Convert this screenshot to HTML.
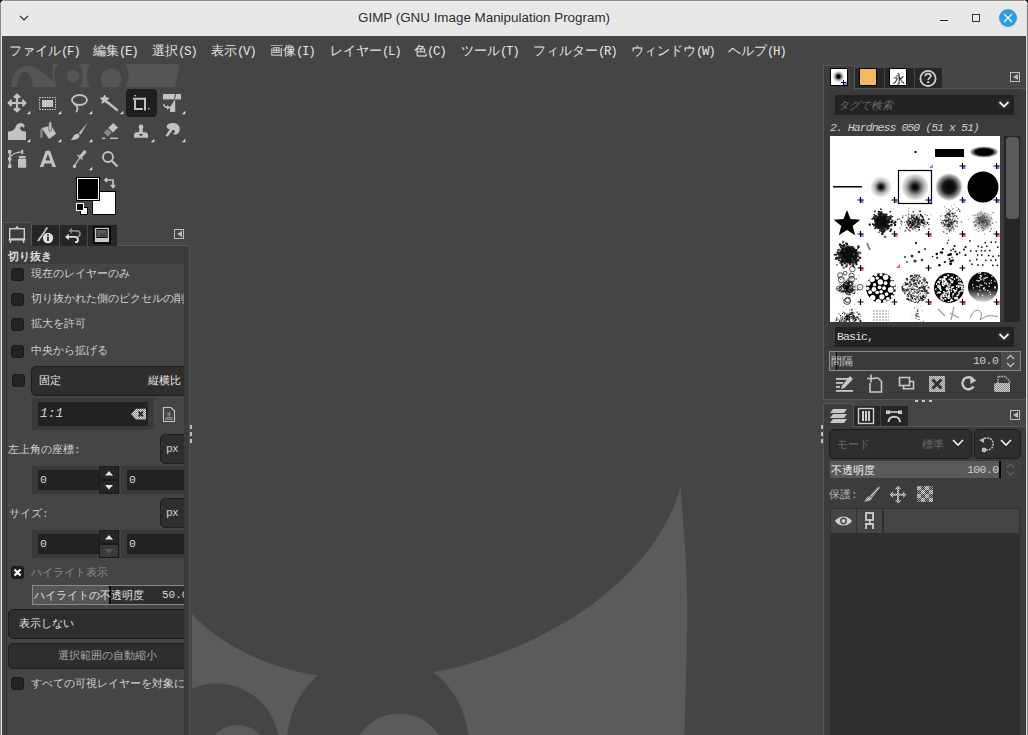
<!DOCTYPE html>
<html><head><meta charset="utf-8">
<style>
*{box-sizing:border-box;margin:0;padding:0}
html,body{width:1028px;height:735px;overflow:hidden;background:#1a1a1a}
body{position:relative;font-family:"Liberation Sans",sans-serif;color:#dcdcdc}
.a{position:absolute}
.m{font-family:"Liberation Mono",monospace}
#win{left:0;top:0;width:1028px;height:735px;background:#454545;border-radius:5px 5px 0 0;overflow:hidden}
#title{left:0;top:0;width:1028px;height:36px;background:#e8e8e8;color:#2e2e2e;font-size:14px}
#menubar{left:2px;top:36px;width:1024px;height:28px;background:#454545;font-size:13px;color:#e6e6e6}
.mi{position:absolute;top:6px;white-space:nowrap}
.mi .m{letter-spacing:-1.4px;font-size:12.5px}
.bl{left:0;top:4px;width:2px;height:731px;background:linear-gradient(90deg,#8a8a8a 0 1px,#e4e4e4 1px 2px)}
.br{left:1026px;top:4px;width:2px;height:731px;background:linear-gradient(90deg,#d8d8d8 0 1px,#8a8a8a 1px 2px)}
.ico{position:absolute}
.tri{position:absolute;width:0;height:0;border-left:5px solid transparent;border-bottom:5px solid #d8d8d8}
.tab{position:absolute;background:#262626}
.tabact{position:absolute;background:#454545;border:1px solid #5c5c5c;border-bottom:none}
.pmenu{position:absolute;width:10px;height:10px;border:1px solid #bdbdbd}
.pmenu:after{content:"";position:absolute;left:2px;top:1px;border-right:5px solid #bdbdbd;border-top:3.5px solid transparent;border-bottom:3.5px solid transparent}
.opt{font-size:11px;color:#d2d2d2;white-space:nowrap;margin-top:-1px}
.cb{position:absolute;width:13px;height:13px;border-radius:3px;background:#232323;border:1px solid #1a1a1a}
.btn{position:absolute;background:#2e2e2e;border:1px solid #1d1d1d;border-radius:5px}
.ent{position:absolute;background:#222}
.frame{position:absolute;background:#3a3a3a}
</style></head><body>
<div id="win" class="a">
  <!-- TITLE -->
  <div id="title" class="a">
    <div class="a" style="left:4px;top:0;width:1020px;height:1px;background:#8a8a8a"></div><div class="a" style="left:2px;top:1px;width:1024px;height:1px;background:#f6f6f6"></div>
    <svg class="a" style="left:18px;top:14px" width="12" height="9"><path d="M2 2 L6 6 L10 2" fill="none" stroke="#333" stroke-width="1.2"/></svg>
    <div class="a" style="left:358px;top:10px;font-size:13.4px;white-space:nowrap">GIMP (GNU Image Manipulation Program)</div>
    <div class="a" style="left:940px;top:20px;width:8px;height:1px;background:#222"></div>
    <div class="a" style="left:972px;top:14px;width:8px;height:8px;border:1px solid #333"></div>
    <div class="a" style="left:999px;top:9px;width:18px;height:18px;border-radius:50%;background:#2a9ddf"></div>
    <svg class="a" style="left:1003px;top:13px" width="10" height="10"><path d="M1 1L9 9M9 1L1 9" stroke="#fff" stroke-width="1.2"/></svg>
  </div>
  <!-- MENUBAR -->
  <div id="menubar" class="a">
    <span class="mi" style="left:7px">ファイル<span class="m">(F)</span></span>
    <span class="mi" style="left:91px">編集<span class="m">(E)</span></span>
    <span class="mi" style="left:150px">選択<span class="m">(S)</span></span>
    <span class="mi" style="left:209px">表示<span class="m">(V)</span></span>
    <span class="mi" style="left:268px">画像<span class="m">(I)</span></span>
    <span class="mi" style="left:328px">レイヤー<span class="m">(L)</span></span>
    <span class="mi" style="left:412px">色<span class="m">(C)</span></span>
    <span class="mi" style="left:459px">ツール<span class="m">(T)</span></span>
    <span class="mi" style="left:531px">フィルター<span class="m">(R)</span></span>
    <span class="mi" style="left:629px">ウィンドウ<span class="m">(W)</span></span>
    <span class="mi" style="left:726px">ヘルプ<span class="m">(H)</span></span>
  </div>

  <!-- CANVAS -->
  <svg class="a" style="left:0;top:0" width="1028" height="735">
    <rect x="190" y="64" width="633" height="671" fill="#454545"/>
    <path d="M189.5,611.4 L196.9,619.1 L204.7,626.2 L212.9,632.9 L221.5,639.1 L230.5,644.8 L239.7,650.1 L249.2,654.8 L258.9,659.1 L268.8,663.0 L278.8,666.4 L288.9,669.4 L299.2,671.9 L309.5,674.1 L319.8,675.8 L330.2,677.1 L340.6,678.1 L351.0,678.7 L361.3,679.0 L371.7,679.0 L381.9,678.6 L392.1,678.0 L402.3,677.0 L412.3,675.8 L422.3,674.3 L432.2,672.6 L442.0,670.6 L451.7,668.4 L461.2,665.9 L470.7,663.3 L480.1,660.4 L489.4,657.3 L498.6,654.0 L507.6,650.5 L516.6,646.8 L525.4,643.0 L534.1,638.9 L542.7,634.6 L551.2,630.1 L559.5,625.5 L567.7,620.6 L575.8,615.5 L583.7,610.2 L591.5,604.7 L599.0,599.0 L606.4,593.1 L613.6,587.0 L620.6,580.6 L627.3,574.0 L633.8,567.2 L640.1,560.2 L646.0,552.9 L651.7,545.4 L657.0,537.7 L662.0,529.8 L666.6,521.6 L670.7,513.3 L674.5,504.8 L677.8,496.1 L680.5,487.2 C681.0,494.3 682.8,514.4 683.8,529.9 C684.8,545.4 686.3,561.5 686.8,580.0 C687.3,598.5 687.2,622.7 687.0,641.0 C686.8,659.3 686.1,674.3 685.7,690.0 C685.3,705.7 684.7,727.5 684.5,735.0 L189,735 Z" fill="#5b5b5b"/>
    <circle cx="216.5" cy="746.3" r="62.7" fill="#454545"/>
    <circle cx="377.7" cy="743.8" r="90.9" fill="#454545"/>
    <circle cx="237.5" cy="755.5" r="30.5" fill="#5b5b5b"/>
    <circle cx="399.3" cy="760.9" r="47.4" fill="#5b5b5b"/>
    <rect x="190" y="64" width="2" height="671" fill="#454545"/>
  </svg>

  <!-- LEFT DOCK -->
  <div class="a" style="left:2px;top:64px;width:188px;height:671px;background:#454545"></div>
  <svg class="a" style="left:0;top:0" width="200" height="220">
    <defs><clipPath id="bn"><rect x="2" y="64" width="186" height="23"/></clipPath></defs>
    <g clip-path="url(#bn)" fill="#555555">
      <path d="M52.5,64 L179,64 L175,87 L11,87 C11,74 19,66 28,66 C37,66 45,74 52.5,81 Z"/>
      <ellipse cx="25" cy="87.5" rx="7.8" ry="15.8" fill="#454545"/>
      <ellipse cx="68.5" cy="76" rx="14.2" ry="17" fill="#454545"/>
      <circle cx="73" cy="76.3" r="6.3"/>
      <ellipse cx="107.7" cy="76" rx="20.8" ry="22" fill="#454545"/>
      <circle cx="111" cy="79" r="10.5"/>
    </g>
    <rect x="126" y="89" width="31" height="28" rx="4" fill="#1e1e1e"/>
    <g fill="#c3c3c3" stroke="none">
      <!-- move -->
      <path d="M17,95 V111 M9,103 H25 M14,97.6 L17,94.8 L20,97.6 M14,108.4 L17,111.2 L20,108.4 M11.6,100 L8.8,103 L11.6,106 M22.4,100 L25.2,103 L22.4,106" fill="none" stroke="#c3c3c3" stroke-width="2.2"/>
      <!-- rect select -->
      <rect x="39.5" y="97.5" width="16" height="12" fill="none" stroke="#c3c3c3" stroke-width="1" stroke-dasharray="1.5 1"/>
      <rect x="42" y="100" width="11" height="7"/>
      <!-- lasso -->
      <ellipse cx="79.5" cy="100" rx="7.5" ry="5" fill="none" stroke="#c3c3c3" stroke-width="1.8"/>
      <path d="M73.5,103 C75,104 77,106 77.5,108 C78,110 77,111 76,112" fill="none" stroke="#c3c3c3" stroke-width="1.8"/>
      <!-- fuzzy -->
      <polygon points="104.6,95.0 105.9,97.8 109.0,98.2 106.7,100.3 107.3,103.3 104.6,101.8 101.9,103.3 102.5,100.3 100.2,98.2 103.3,97.8" stroke="#c3c3c3" stroke-width="0.8" stroke-linejoin="round"/>
      <path d="M106.5,101.5 L117.8,110.6" stroke="#c3c3c3" stroke-width="2.4"/>
      <!-- crop -->
      <path d="M133,98.7 H145 V110.5 M135,100 V109 H142.8" fill="none" stroke="#c3c3c3" stroke-width="2"/><rect x="134.5" y="95" width="1.5" height="1.3"/><rect x="148" y="108" width="1.4" height="1.4"/>
      <!-- transform -->
      <rect x="163" y="94" width="18" height="5.4"/>
      <path d="M175.2,99 V112 H170 V107 Z"/>
      <path d="M163.8,104 C163.8,107 165.5,107.5 168.5,107.5" fill="none" stroke="#c3c3c3" stroke-width="1.5"/>
      <path d="M167,105 L170.2,107.5 L167,110Z"/>
      <path d="M175.6,94 L174.6,99.4" stroke="#454545" stroke-width="0.9"/>
      <!-- warp -->
      <path d="M8,140 L8,131.6 C13,131.6 15,129 16,126 C17.5,122.5 23,121.5 24.5,125.5 C25,127 24,128 23,127.5 C22.5,126 20.5,126 20.2,128 C20,130 22,131.6 26,131.6 L26,140 Z"/>
      <!-- bucket -->
      <path d="M41.6,128 L51.3,125.4 L56.1,133.8 L49.1,139 Z"/>
      <path d="M40.3,130 Q40.5,128.8 42,128.3 L42.6,129 V137 Q42.6,138 41.5,138 Q40.3,138 40.3,137Z" fill="#8a8a8a"/>
      <rect x="48.8" y="121.8" width="2.9" height="9.5" rx="1.4" stroke="#454545" stroke-width="0.6"/>
      <!-- brush -->
      <path d="M87.8,122.5 L80.6,134.6 L78.6,133.2 Z"/>
      <path d="M78,133.6 C80,135 80,137 78,138.6 C76,140 73,140 70.8,140 C72.5,138.5 73,135.5 75.5,134.2Z"/>
      <!-- eraser -->
      <path d="M113.4,123 L118,127.5 L112.9,132.4 L108.3,127.8Z"/>
      <path d="M107.6,128.8 L111.6,132.8 L107.9,136.4 L103.9,132.4Z" fill="#8a8a8a"/>
      <rect x="102" y="137.6" width="3.2" height="1.4"/><rect x="110" y="137.6" width="8" height="1.4"/>
      <!-- clone -->
      <circle cx="141" cy="127" r="2.4"/><path d="M139.6,128.5 H142.4 L143,132.5 H139Z"/>
      <path d="M137,132.3 H145 C146.5,132.3 148,133.5 148,135 V137.8 H134 V135 C134,133.5 135.5,132.3 137,132.3Z"/>
      <path d="M138.6,134 H143.4 L141,136.6Z" fill="#454545"/>
      <!-- smudge -->
      <path d="M171.5,123.2 C176.5,122.2 180.5,125.5 179.7,130.2 C179.2,133.8 175.5,135.8 172.8,133.8 C174.8,133 175.5,131.5 174.5,130.5 C173.5,129.5 172.3,130.3 171.8,131 L167.6,136.8 L165.6,135.4 L169.6,129.5 C167,128.5 166.2,127 166.8,125.6 C167.5,124 169,123.5 171.5,123.2Z"/>
      <!-- paths -->
      <rect x="8" y="150" width="3.4" height="3.4" rx="0.6"/><rect x="8" y="164.6" width="3.4" height="3.4" rx="0.6"/><rect x="8" y="157.2" width="3.4" height="3.4" rx="0.6"/>
      <rect x="9" y="152" width="1.5" height="14"/>
      <path d="M10.5,156.5 C13,153.5 17,152 22,151.8" fill="none" stroke="#c3c3c3" stroke-width="1.3"/>
      <rect x="21.4" y="149.8" width="1.8" height="4.4" rx="0.5"/>
      <rect x="19" y="156" width="6.6" height="2.2" rx="0.4"/><rect x="18" y="158.8" width="8.2" height="8.9" rx="0.8"/>
      <!-- text A -->
      <path d="M45.8,150.7 H50 L56,167 H52.4 L51.2,163.6 H44.6 L43.4,167 H39.8 Z M45.6,160.6 H50.2 L47.9,153.9 Z" fill-rule="evenodd"/>
      <!-- picker -->
      <path d="M84,150.3 C86,150 86.8,151.5 86,153 L81.5,158 L79.2,156 Z"/>
      <path d="M77.5,155 L82.5,159.5" stroke="#c3c3c3" stroke-width="1.5"/>
      <path d="M80,157.5 L74.5,165.5" stroke="#c3c3c3" stroke-width="1.3"/>
      <circle cx="74.5" cy="166.3" r="1.7"/>
      <!-- zoom -->
      <circle cx="108" cy="157" r="5" fill="none" stroke="#c3c3c3" stroke-width="1.8"/>
      <path d="M111.5,160.5 L117.5,166.5" stroke="#c3c3c3" stroke-width="2.2"/>
    </g>
    <g fill="#dcdcdc">
      <path d="M30.3,110.8 V114.3 H26.8Z M61.3,110.8 V114.3 H57.8Z M92.3,110.8 V114.3 H88.8Z M123.3,110.8 V114.3 H119.8Z M185.3,110.8 V114.3 H181.8Z"/>
      <path d="M30.3,138.8 V142.3 H26.8Z M61.3,138.8 V142.3 H57.8Z M92.3,138.8 V142.3 H88.8Z M154.3,138.8 V142.3 H150.8Z M185.3,138.8 V142.3 H181.8Z"/>
      <path d="M92.3,166.8 V170.3 H88.8Z"/>
    </g>
    <!-- fg/bg -->
    <rect x="92.5" y="191.5" width="23" height="23" fill="#fff" stroke="#000" stroke-width="1"/>
    <rect x="76.5" y="177.5" width="23" height="23" fill="#000" stroke="#000" stroke-width="1"/>
    <rect x="77.5" y="178.5" width="21" height="21" fill="#000" stroke="#fff" stroke-width="1"/>
    <path d="M105,180 H113 V186 M107,178 L105,180 L107,182 M111,185 L113,187.5 L115,185" fill="none" stroke="#c8c8c8" stroke-width="1.6"/>
    <rect x="80.5" y="207.5" width="7" height="7" fill="#fff" stroke="#000"/>
    <rect x="76.5" y="203.5" width="7" height="7" fill="#000" stroke="#fff"/>
  </svg>
  <!-- left dock tabs -->
  <div class="a" style="left:3px;top:245px;width:187px;height:490px;background:#3c3c3c;border-left:1px solid #414141;border-top:1px solid #555;border-right:1px solid #555"></div>
  <div class="tabact" style="left:3px;top:222px;width:29px;height:24px;background:#3c3c3c;border-color:#555"></div>
  <div class="tab" style="left:32px;top:225px;width:27px;height:21px"></div>
  <div class="tab" style="left:60px;top:225px;width:27px;height:21px"></div>
  <div class="tab" style="left:88px;top:225px;width:29px;height:21px"></div>
  <svg class="a" style="left:0;top:218px" width="130" height="30">
    <g fill="none" stroke="#cdcdcd" stroke-width="1.4">
      <rect x="9.7" y="10.7" width="14.6" height="10.3"/>
      <path d="M8.5,21.7 H25.5 M11,21.7 L10,25 M23,21.7 L24,25"/>
    </g>
    <path d="M15.3,10 L17,7.6 L18.7,10Z" fill="#cdcdcd"/>
    <path d="M37,23 L46.5,9 L48,10 L39,23.2 Z" fill="#cdcdcd"/>
    <path d="M40,18 L45,11" stroke="#262626" stroke-width="0.8"/>
    <circle cx="48" cy="20" r="5.2" fill="#e0e0e0"/><rect x="47.1" y="18.6" width="1.8" height="4.4" fill="#262626"/><rect x="47.1" y="16.2" width="1.8" height="1.6" fill="#262626"/>
    <path d="M71,12.8 H76.5 C79,12.8 80,14.2 80,15.8 C80,17.4 79,18.6 77.5,18.6" fill="none" stroke="#8a8a8a" stroke-width="1.8"/>
    <path d="M68.5,12.8 L72,9.8 V15.8Z" fill="#8a8a8a"/>
    <path d="M67.5,18.9 H74.5 C77,18.9 78,20.3 78,21.9 C78,23.5 77,24.2 75,24.2" fill="none" stroke="#dedede" stroke-width="1.8"/>
    <path d="M65,18.9 L68.8,15.8 V22Z" fill="#dedede"/>
    <rect x="93" y="8" width="18" height="18" fill="#000"/>
    <rect x="94.8" y="9.8" width="14.2" height="14.3" fill="#c8c8c8"/>
    <rect x="96.3" y="11" width="11.4" height="9" fill="#111"/>
    <rect x="97.3" y="12" width="9.4" height="7" fill="#5e5e5e"/>
    <path d="M99,19 L101,14 L103,17 L105,13 L106,19Z" fill="#444"/>
  </svg>
  <div class="pmenu" style="left:174px;top:229px"></div>
  <!-- tool options -->
  <div class="a" style="left:8px;top:248.5px;font-size:11px;font-weight:normal;-webkit-text-stroke:0.35px #e6e6e6;color:#e6e6e6">切り抜き</div>
  <div class="a" style="left:8px;top:264px;width:176px;height:471px;background:#454545"></div>
  <div class="a" style="left:0;top:0;width:184px;height:735px;overflow:hidden">
  <div class="cb" style="left:11px;top:268px"></div><div class="a opt" style="left:31px;top:267px">現在のレイヤーのみ</div>
  <div class="cb" style="left:11px;top:293px"></div><div class="a opt" style="left:31px;top:292px">切り抜かれた側のピクセルの削</div>
  <div class="cb" style="left:11px;top:318px"></div><div class="a opt" style="left:31px;top:317px">拡大を許可</div>
  <div class="cb" style="left:11px;top:345px"></div><div class="a opt" style="left:31px;top:344px">中央から拡げる</div>
  <div class="cb" style="left:12px;top:374px"></div>
  <div class="btn" style="left:31px;top:366px;width:160px;height:30px"></div>
  <div class="a opt" style="left:39px;top:374px;color:#e8e8e8">固定</div>
  <div class="a opt" style="left:148px;top:374px;color:#e8e8e8">縦横比</div>
  <div class="frame" style="left:32px;top:398px;width:122px;height:32px"></div>
  <div class="ent" style="left:38px;top:402px;width:110px;height:24px"></div>
  <div class="a m" style="left:40px;top:406px;font-size:13px;font-style:italic;color:#d0d0d0">1:1</div>
  <svg class="a" style="left:130px;top:407px" width="18" height="14"><defs><pattern id="ck5" width="2" height="2" patternUnits="userSpaceOnUse"><rect width="2" height="2" fill="#888"/><rect width="1" height="1" fill="#e0e0e0"/><rect x="1" y="1" width="1" height="1" fill="#e0e0e0"/></pattern></defs><path d="M1,7 L6,1.8 H16 V12.6 H6 Z" fill="url(#ck5)"/><path d="M8.5,4.5 L13,9.5 M13,4.5 L8.5,9.5" stroke="#1e1e1e" stroke-width="1.8"/></svg>
  <svg class="a" style="left:162px;top:406px" width="14" height="17"><path d="M1.5,1.5 H9 L12.5,5 V15.5 H1.5 Z" fill="none" stroke="#c8c8c8" stroke-width="1.1"/><circle cx="7" cy="8" r="2" fill="#7a7a7a"/><path d="M3,14 C3,11 5,10.5 7,10.5 C9,10.5 11,11 11,14Z" fill="#7a7a7a"/></svg>
  <div class="a opt" style="left:8px;top:443px">左上角の座標<span class="m" style="font-size:11px;letter-spacing:-1px">:</span></div>
  <div class="btn" style="left:160px;top:434px;width:40px;height:30px"></div>
  <div class="a m" style="left:166px;top:443px;font-size:11px;color:#d6d6d6;letter-spacing:-0.5px">px</div>
  <!-- spin row 1 -->
  <div class="frame" style="left:32px;top:466px;width:88px;height:28px"></div>
  <div class="ent" style="left:38px;top:470px;width:61px;height:20px"></div>
  <div class="a m" style="left:40px;top:473px;font-size:11.5px;color:#d6d6d6">0</div>
  <div class="a" style="left:99px;top:466px;width:20px;height:14px;background:#262626;border:1px solid #1a1a1a"></div>
  <div class="a" style="left:99px;top:480px;width:20px;height:14px;background:#262626;border:1px solid #1a1a1a"></div>
  <svg class="a" style="left:99px;top:466px" width="20" height="28"><path d="M6,9.5 L10,5 L14,9.5Z M6,19 L10,23.5 L14,19Z" fill="#e6e6e6"/></svg>
  <div class="frame" style="left:121px;top:466px;width:70px;height:28px"></div>
  <div class="ent" style="left:127px;top:470px;width:60px;height:20px"></div>
  <div class="a m" style="left:129px;top:473px;font-size:11.5px;color:#d6d6d6">0</div>
  <div class="a opt" style="left:9px;top:507px">サイズ<span class="m" style="font-size:11px;letter-spacing:-1px">:</span></div>
  <div class="btn" style="left:160px;top:498px;width:40px;height:30px"></div>
  <div class="a m" style="left:166px;top:507px;font-size:11px;color:#d6d6d6;letter-spacing:-0.5px">px</div>
  <!-- spin row 2 -->
  <div class="frame" style="left:32px;top:530px;width:88px;height:28px"></div>
  <div class="ent" style="left:38px;top:534px;width:61px;height:20px"></div>
  <div class="a m" style="left:40px;top:537px;font-size:11.5px;color:#d6d6d6">0</div>
  <div class="a" style="left:99px;top:530px;width:20px;height:14px;background:#262626;border:1px solid #1a1a1a"></div>
  <div class="a" style="left:99px;top:544px;width:20px;height:14px;background:#3a3a3a;border:1px solid #1a1a1a"></div>
  <svg class="a" style="left:99px;top:530px" width="20" height="28"><path d="M6,9.5 L10,5 L14,9.5Z" fill="#e6e6e6"/><path d="M6,19 L10,23.5 L14,19Z" fill="#5a5a5a"/></svg>
  <div class="frame" style="left:121px;top:530px;width:70px;height:28px"></div>
  <div class="ent" style="left:127px;top:534px;width:60px;height:20px"></div>
  <div class="a m" style="left:129px;top:537px;font-size:11.5px;color:#d6d6d6">0</div>
  <!-- highlight -->
  <div class="cb" style="left:11px;top:566px;background:#1c1c1c"></div>
  <svg class="a" style="left:11px;top:566px" width="13" height="13"><path d="M3.5,3.5 L9.5,9.5 M9.5,3.5 L3.5,9.5" stroke="#fff" stroke-width="2.2"/></svg>
  <div class="a opt" style="left:31px;top:566px;color:#8c8c8c">ハイライト表示</div>
  <div class="a" style="left:32px;top:585px;width:160px;height:20px;background:#2e2e2e;border:1px solid #8a8a8a"></div>
  <div class="a" style="left:33px;top:586px;width:76px;height:18px;background:#555"></div>
  <div class="a" style="left:109px;top:586px;width:1.5px;height:18px;background:#000"></div>
  <div class="a opt" style="left:34px;top:589px;color:#e0e0e0">ハイライトの不透明度</div>
  <div class="a m" style="left:162px;top:589px;font-size:11px;color:#d8d8d8">50.0</div>
  <div class="btn" style="left:8px;top:609px;width:190px;height:30px"></div>
  <div class="a opt" style="left:19px;top:617px;color:#e4e4e4">表示しない</div>
  <div class="btn" style="left:8px;top:643px;width:190px;height:26px"></div>
  <div class="a opt" style="left:58px;top:649px;color:#a6a6a6">選択範囲の自動縮小</div>
  <div class="cb" style="left:11px;top:677px"></div><div class="a opt" style="left:31px;top:677px">すべての可視レイヤーを対象に</div>
  </div>
  <div class="a" style="left:189px;top:246px;width:1px;height:489px;background:#555"></div>
  <div class="a" style="left:190px;top:425px;width:2px;height:18px;background:repeating-linear-gradient(#bdbdbd 0 4px,transparent 4px 7px)"></div>
    <!-- RIGHT DOCK -->
  <div class="a" style="left:823px;top:64px;width:203px;height:671px;background:#454545"></div>
  <!-- brushes frame -->
  <div class="a" style="left:823px;top:88px;width:203px;height:312px;background:#3c3c3c;border:1px solid #555;border-right:none"></div>
  <div class="tabact" style="left:823px;top:65px;width:32px;height:24px;background:#3c3c3c;border-color:#555"></div>
  <div class="tab" style="left:855px;top:68px;width:29px;height:20px"></div>
  <div class="tab" style="left:885px;top:68px;width:29px;height:20px"></div>
  <div class="tab" style="left:915px;top:68px;width:27px;height:20px"></div>
  <svg class="a" style="left:823px;top:64px" width="130" height="26">
    <defs><radialGradient id="tb"><stop offset="0" stop-color="#000"/><stop offset="0.2" stop-color="#000"/><stop offset="1" stop-color="#fff" stop-opacity="0"/></radialGradient></defs>
    <rect x="7" y="4" width="18" height="18" fill="#000"/><rect x="8" y="5" width="16" height="16" fill="#fff"/>
    <circle cx="15.5" cy="12.5" r="7" fill="url(#tb)"/>
    <rect x="20" y="18" width="4" height="3" fill="#7a9cff"/><path d="M18,18.5 h5 M20.5,16 v5" stroke="#000" stroke-width="1"/>
    <rect x="36" y="4" width="18" height="18" fill="#000"/><rect x="37" y="5" width="16" height="16" fill="#f4b860"/>
    <rect x="66" y="4" width="18" height="18" fill="#000"/><rect x="67" y="5" width="16" height="16" fill="#fff"/>
    <circle cx="105" cy="14.4" r="7.6" fill="none" stroke="#cfcfcf" stroke-width="1.8"/><path d="M102.2,12.3 C102.2,10.3 103.6,9.6 105,9.6 C106.6,9.6 107.8,10.5 107.8,12 C107.8,13.8 105.2,14 105.2,16" fill="none" stroke="#cfcfcf" stroke-width="1.8"/><rect x="104.2" y="17.2" width="2" height="2" fill="#cfcfcf"/>
  </svg>
  <div class="a" style="left:893px;top:71px;font-size:12px;color:#000">永</div>
  
  <div class="pmenu" style="left:1010px;top:72px"></div>
  <div class="frame" style="left:829px;top:91px;width:192px;height:28px;background:#393939"></div>
  <div class="ent" style="left:835px;top:95px;width:179px;height:20px"></div>
  <div class="a" style="left:838px;top:98px;font-size:11px;font-style:italic;color:#6e6e6e">タグで検索</div>
  <svg class="a" style="left:998px;top:99px" width="12" height="10"><rect x="0" y="0" width="12" height="10" fill="#2a2a2a"/><path d="M1.5,3 L6,7.5 L10.5,3" fill="none" stroke="#f0f0f0" stroke-width="1.8"/></svg>
  <div class="a m" style="left:830px;top:121px;font-size:11.5px;font-style:italic;color:#d0d0d0;letter-spacing:-0.95px;white-space:nowrap">2. Hardness 050 (51 x 51)</div>
  <div class="a" style="left:1004px;top:136px;width:16px;height:186px;background:#262626"></div>
  <div class="a" style="left:1006px;top:137px;width:13px;height:82px;background:#595959;border-radius:4px"></div>
  <svg class="a" style="left:0;top:0" width="1028" height="735">
<defs>
<radialGradient id="g1"><stop offset="0" stop-color="#000"/><stop offset="0.18" stop-color="#000" stop-opacity="0.9"/><stop offset="0.55" stop-color="#000" stop-opacity="0.3"/><stop offset="1" stop-color="#000" stop-opacity="0"/></radialGradient>
<radialGradient id="g2"><stop offset="0" stop-color="#000"/><stop offset="0.2" stop-color="#000" stop-opacity="0.9"/><stop offset="0.6" stop-color="#000" stop-opacity="0.35"/><stop offset="1" stop-color="#000" stop-opacity="0"/></radialGradient>
<radialGradient id="g3"><stop offset="0" stop-color="#000"/><stop offset="0.45" stop-color="#000" stop-opacity="0.9"/><stop offset="0.8" stop-color="#000" stop-opacity="0.4"/><stop offset="1" stop-color="#000" stop-opacity="0"/></radialGradient>
<linearGradient id="g4" x1="0" y1="0" x2="0" y2="1"><stop offset="0" stop-color="#000"/><stop offset="0.55" stop-color="#111"/><stop offset="1" stop-color="#ddd"/></linearGradient>
<radialGradient id="g5"><stop offset="0" stop-color="#000" stop-opacity="0.6"/><stop offset="1" stop-color="#000" stop-opacity="0"/></radialGradient>
<radialGradient id="ge"><stop offset="0" stop-color="#000"/><stop offset="0.6" stop-color="#000"/><stop offset="1" stop-color="#000" stop-opacity="0.15"/></radialGradient>
<clipPath id="bg"><rect x="830" y="136" width="170" height="186"/></clipPath>
</defs>
<rect x="830" y="136" width="170" height="186" fill="#fff"/>
<g clip-path="url(#bg)" fill="#000">
<rect x="914.5" y="151" width="2" height="2"/>
<rect x="935" y="149" width="29" height="8"/>
<ellipse cx="984" cy="152" rx="14" ry="5.5" fill="url(#ge)"/>
<path d="M933,164V168H929Z" fill="#7090ff"/>
<rect x="962.0" y="165.5" width="3.5" height="3.5" fill="#7090ff"/>
<path d="M959.5,166.0h6M962.5,163.0v6" stroke="#000" stroke-width="1.2"/>
<rect x="996.0" y="165.5" width="3.5" height="3.5" fill="#7090ff"/>
<path d="M993.5,166.0h6M996.5,163.0v6" stroke="#000" stroke-width="1.2"/>
<rect x="833" y="186" width="29" height="1.5"/>
<circle cx="881" cy="187" r="11" fill="url(#g1)"/>
<circle cx="915" cy="187" r="14" fill="url(#g2)"/>
<circle cx="949" cy="187" r="14" fill="url(#g3)"/>
<circle cx="983" cy="187" r="15.5"/>
<rect x="898.5" y="170.5" width="33" height="33" fill="none" stroke="#000" stroke-width="1.2"/>
<rect x="860.0" y="199.5" width="3.5" height="3.5" fill="#7090ff"/>
<path d="M857.5,200.0h6M860.5,197.0v6" stroke="#000" stroke-width="1.2"/>
<rect x="894.0" y="199.5" width="3.5" height="3.5" fill="#7090ff"/>
<path d="M891.5,200.0h6M894.5,197.0v6" stroke="#000" stroke-width="1.2"/>
<rect x="928.0" y="199.5" width="3.5" height="3.5" fill="#7090ff"/>
<path d="M925.5,200.0h6M928.5,197.0v6" stroke="#000" stroke-width="1.2"/>
<rect x="962.0" y="199.5" width="3.5" height="3.5" fill="#7090ff"/>
<path d="M959.5,200.0h6M962.5,197.0v6" stroke="#000" stroke-width="1.2"/>
<rect x="996.0" y="199.5" width="3.5" height="3.5" fill="#7090ff"/>
<path d="M993.5,200.0h6M996.5,197.0v6" stroke="#000" stroke-width="1.2"/>
<polygon points="847.0,210.0 850.5,219.1 860.3,219.7 852.7,225.9 855.2,235.3 847.0,230.0 838.8,235.3 841.3,225.9 833.7,219.7 843.5,219.1"/>
<path fill-opacity="0.62" d="M887.1 225.1h2.0v2.0h-2.0zM881.4 221.6h1.8v1.8h-1.8zM879.8 223.8h1.5v1.5h-1.5zM883.2 223.1h1.3v1.3h-1.3zM881.5 217.3h1.6v1.6h-1.6zM873.8 217.2h1.4v1.4h-1.4zM885.0 217.1h1.7v1.7h-1.7zM885.4 220.5h1.3v1.3h-1.3zM878.4 227.9h1.2v1.2h-1.2zM874.5 218.8h1.8v1.8h-1.8zM877.4 227.4h1.4v1.4h-1.4zM885.4 219.4h2.3v2.3h-2.3zM882.9 220.0h2.1v2.1h-2.1zM883.8 235.7h2.3v2.3h-2.3zM881.4 227.7h1.5v1.5h-1.5zM883.1 217.2h2.1v2.1h-2.1zM877.4 212.6h2.4v2.4h-2.4zM881.6 222.5h1.3v1.3h-1.3zM876.4 219.4h1.9v1.9h-1.9zM876.8 220.6h1.9v1.9h-1.9zM880.7 216.7h1.4v1.4h-1.4zM886.7 220.8h2.2v2.2h-2.2zM880.8 221.7h1.5v1.5h-1.5zM881.4 222.3h1.8v1.8h-1.8zM879.7 219.6h1.8v1.8h-1.8zM880.8 213.0h1.3v1.3h-1.3zM887.7 225.9h1.3v1.3h-1.3zM883.8 222.6h2.1v2.1h-2.1zM881.8 219.4h1.4v1.4h-1.4zM882.1 222.8h1.7v1.7h-1.7zM882.2 218.6h1.9v1.9h-1.9zM877.1 224.8h2.2v2.2h-2.2zM877.7 219.4h2.0v2.0h-2.0zM873.1 224.8h1.6v1.6h-1.6zM881.0 217.4h1.9v1.9h-1.9zM879.6 225.0h1.5v1.5h-1.5zM884.5 224.7h2.3v2.3h-2.3zM881.1 224.5h1.6v1.6h-1.6zM887.5 216.0h2.1v2.1h-2.1zM877.9 211.7h1.7v1.7h-1.7zM876.4 222.9h1.8v1.8h-1.8zM873.7 217.2h1.4v1.4h-1.4zM883.9 221.8h2.3v2.3h-2.3zM878.4 223.2h1.7v1.7h-1.7zM882.8 218.8h1.7v1.7h-1.7zM879.6 217.3h1.5v1.5h-1.5zM880.3 217.8h1.6v1.6h-1.6zM883.2 221.6h1.9v1.9h-1.9zM879.4 225.1h1.9v1.9h-1.9zM880.0 224.7h1.5v1.5h-1.5zM883.0 218.7h2.0v2.0h-2.0zM878.8 225.3h1.5v1.5h-1.5zM883.9 218.2h2.3v2.3h-2.3zM879.9 223.3h1.8v1.8h-1.8zM885.2 228.2h2.2v2.2h-2.2zM879.6 218.3h1.4v1.4h-1.4zM872.8 215.9h2.4v2.4h-2.4zM883.0 220.9h1.6v1.6h-1.6zM879.3 216.0h2.2v2.2h-2.2zM879.0 221.2h1.6v1.6h-1.6zM884.2 214.7h2.4v2.4h-2.4zM879.9 218.6h1.3v1.3h-1.3zM882.5 224.6h2.4v2.4h-2.4zM876.5 217.9h2.3v2.3h-2.3zM882.4 216.2h2.4v2.4h-2.4z"/>
<path fill-opacity="0.88" d="M876.1 222.6h2.3v2.3h-2.3zM875.7 220.7h1.4v1.4h-1.4zM876.1 215.6h1.3v1.3h-1.3zM891.3 219.8h2.0v2.0h-2.0zM882.1 223.9h1.2v1.2h-1.2zM873.8 223.9h1.8v1.8h-1.8zM875.1 221.0h1.7v1.7h-1.7zM894.2 220.8h2.2v2.2h-2.2zM881.4 216.8h2.2v2.2h-2.2zM888.5 218.9h1.2v1.2h-1.2zM884.8 218.5h2.4v2.4h-2.4zM886.1 223.6h2.1v2.1h-2.1zM884.1 223.0h2.4v2.4h-2.4zM881.7 218.5h1.9v1.9h-1.9zM883.4 227.3h1.4v1.4h-1.4zM884.1 223.9h1.5v1.5h-1.5zM888.1 219.6h1.6v1.6h-1.6zM882.0 225.1h2.2v2.2h-2.2zM890.7 228.5h1.5v1.5h-1.5zM885.5 224.0h1.5v1.5h-1.5zM878.0 224.3h2.4v2.4h-2.4zM887.2 216.8h1.5v1.5h-1.5zM880.4 211.0h1.4v1.4h-1.4zM891.0 223.6h1.5v1.5h-1.5zM880.7 228.8h1.9v1.9h-1.9zM883.9 227.0h1.3v1.3h-1.3zM873.7 218.0h1.9v1.9h-1.9zM883.3 219.6h1.2v1.2h-1.2zM879.7 221.5h1.4v1.4h-1.4zM879.1 220.0h1.6v1.6h-1.6zM886.8 220.2h2.0v2.0h-2.0zM881.7 221.9h1.2v1.2h-1.2zM877.9 210.7h1.2v1.2h-1.2zM874.6 221.8h1.6v1.6h-1.6zM885.5 223.4h2.1v2.1h-2.1zM880.5 214.5h2.2v2.2h-2.2zM877.4 226.1h2.3v2.3h-2.3zM874.9 224.7h2.2v2.2h-2.2zM878.2 218.1h1.9v1.9h-1.9zM886.0 223.9h2.4v2.4h-2.4zM880.5 216.9h2.1v2.1h-2.1zM873.9 223.9h1.3v1.3h-1.3zM886.3 222.1h1.8v1.8h-1.8zM879.5 216.3h1.9v1.9h-1.9zM881.0 221.6h1.6v1.6h-1.6zM881.7 223.4h2.3v2.3h-2.3zM873.1 224.2h1.6v1.6h-1.6zM882.4 225.2h2.2v2.2h-2.2zM883.9 218.2h1.9v1.9h-1.9zM884.1 224.7h2.2v2.2h-2.2zM878.6 211.0h1.5v1.5h-1.5zM877.9 222.0h1.5v1.5h-1.5zM877.7 217.5h1.6v1.6h-1.6zM881.8 220.1h2.1v2.1h-2.1zM880.1 221.3h2.2v2.2h-2.2zM881.8 222.0h2.0v2.0h-2.0zM877.0 216.5h2.2v2.2h-2.2zM879.9 218.4h1.8v1.8h-1.8zM885.5 221.3h2.1v2.1h-2.1zM880.5 224.8h2.0v2.0h-2.0zM875.9 216.4h1.7v1.7h-1.7zM882.4 220.0h2.3v2.3h-2.3zM884.0 224.4h2.0v2.0h-2.0zM877.3 224.8h2.3v2.3h-2.3zM885.2 219.4h2.0v2.0h-2.0zM879.7 213.4h2.0v2.0h-2.0zM883.0 229.8h2.4v2.4h-2.4zM874.1 219.3h1.6v1.6h-1.6zM883.3 217.9h1.3v1.3h-1.3zM881.5 219.6h2.2v2.2h-2.2zM874.6 220.3h2.2v2.2h-2.2zM881.9 226.1h1.5v1.5h-1.5zM877.9 217.1h2.2v2.2h-2.2zM879.5 224.8h2.2v2.2h-2.2zM883.0 228.9h2.4v2.4h-2.4zM878.6 219.8h1.8v1.8h-1.8zM880.3 220.4h2.4v2.4h-2.4zM875.2 225.4h1.9v1.9h-1.9zM880.5 219.6h1.8v1.8h-1.8zM889.7 218.5h1.5v1.5h-1.5zM884.0 224.2h2.2v2.2h-2.2zM877.5 221.5h1.4v1.4h-1.4zM882.0 223.8h2.0v2.0h-2.0zM877.6 225.6h1.3v1.3h-1.3zM884.4 224.5h1.5v1.5h-1.5zM876.8 220.1h1.7v1.7h-1.7zM878.7 220.5h1.4v1.4h-1.4zM877.8 217.1h2.2v2.2h-2.2zM882.8 218.6h2.1v2.1h-2.1zM883.9 218.9h1.6v1.6h-1.6zM876.0 224.7h1.2v1.2h-1.2zM874.3 220.7h1.8v1.8h-1.8zM882.1 223.6h2.2v2.2h-2.2zM882.6 220.2h1.3v1.3h-1.3zM874.4 222.7h1.6v1.6h-1.6zM878.7 213.3h1.4v1.4h-1.4zM880.3 220.9h2.3v2.3h-2.3zM878.8 213.0h2.0v2.0h-2.0zM877.2 218.1h2.4v2.4h-2.4zM880.5 230.2h2.1v2.1h-2.1zM882.6 217.1h2.3v2.3h-2.3zM878.7 214.3h2.1v2.1h-2.1zM880.7 219.4h1.6v1.6h-1.6zM884.7 221.3h2.0v2.0h-2.0zM882.1 231.0h2.0v2.0h-2.0zM878.2 216.4h1.8v1.8h-1.8zM886.7 221.0h2.0v2.0h-2.0zM881.9 220.9h1.9v1.9h-1.9zM880.8 225.3h1.3v1.3h-1.3zM879.7 222.3h1.5v1.5h-1.5zM876.5 219.5h2.4v2.4h-2.4zM875.5 216.9h1.3v1.3h-1.3zM883.4 225.0h1.4v1.4h-1.4zM879.9 220.1h2.3v2.3h-2.3zM875.7 220.1h1.6v1.6h-1.6zM878.1 216.5h1.5v1.5h-1.5zM884.7 226.9h1.7v1.7h-1.7zM881.0 219.7h2.4v2.4h-2.4zM888.8 225.1h1.7v1.7h-1.7zM883.9 220.5h1.8v1.8h-1.8zM880.2 216.3h2.4v2.4h-2.4zM879.4 219.7h1.9v1.9h-1.9zM875.4 223.2h1.7v1.7h-1.7zM877.4 218.8h2.1v2.1h-2.1zM890.9 220.8h2.1v2.1h-2.1zM887.4 226.8h2.1v2.1h-2.1zM879.0 223.6h2.0v2.0h-2.0zM876.2 217.8h2.1v2.1h-2.1zM881.1 232.7h2.3v2.3h-2.3zM882.4 221.4h1.5v1.5h-1.5zM886.1 224.3h1.9v1.9h-1.9zM877.8 224.4h1.5v1.5h-1.5zM883.0 215.5h2.1v2.1h-2.1zM878.3 222.5h2.2v2.2h-2.2zM874.2 210.6h1.6v1.6h-1.6zM880.8 211.5h1.7v1.7h-1.7zM876.8 219.1h2.0v2.0h-2.0zM881.3 219.4h1.5v1.5h-1.5zM884.0 222.8h2.1v2.1h-2.1zM880.5 223.3h1.6v1.6h-1.6zM879.7 222.6h2.1v2.1h-2.1zM889.3 216.1h2.3v2.3h-2.3zM882.1 217.6h1.6v1.6h-1.6zM888.8 217.4h1.5v1.5h-1.5zM878.5 224.0h1.7v1.7h-1.7zM882.7 226.1h2.2v2.2h-2.2zM883.7 216.4h1.4v1.4h-1.4zM883.4 218.7h1.2v1.2h-1.2zM876.0 219.5h2.4v2.4h-2.4zM881.5 219.6h1.9v1.9h-1.9zM882.4 221.9h2.1v2.1h-2.1zM885.9 224.0h1.4v1.4h-1.4zM879.2 218.5h1.5v1.5h-1.5zM874.3 220.0h1.7v1.7h-1.7zM886.9 219.8h1.8v1.8h-1.8zM879.9 214.5h2.3v2.3h-2.3zM883.7 215.5h2.2v2.2h-2.2zM885.2 213.4h2.3v2.3h-2.3zM874.8 220.0h2.2v2.2h-2.2zM879.0 222.1h2.1v2.1h-2.1zM879.3 222.8h1.4v1.4h-1.4zM878.2 231.7h1.3v1.3h-1.3zM885.3 225.0h2.1v2.1h-2.1zM885.1 222.8h1.9v1.9h-1.9zM882.9 221.5h1.4v1.4h-1.4zM881.6 227.6h1.9v1.9h-1.9zM882.3 224.1h1.4v1.4h-1.4zM879.1 225.9h2.2v2.2h-2.2zM880.5 229.8h2.3v2.3h-2.3zM871.4 217.9h1.8v1.8h-1.8zM890.2 224.1h2.2v2.2h-2.2zM876.3 220.1h1.5v1.5h-1.5zM879.4 218.4h1.2v1.2h-1.2zM876.1 226.4h2.1v2.1h-2.1zM882.3 223.0h1.6v1.6h-1.6zM884.3 217.3h2.0v2.0h-2.0zM880.5 226.2h1.4v1.4h-1.4zM888.4 221.1h2.2v2.2h-2.2zM876.5 221.6h2.3v2.3h-2.3zM883.1 218.2h2.1v2.1h-2.1zM882.5 220.1h2.2v2.2h-2.2zM876.3 219.6h1.4v1.4h-1.4zM879.7 224.4h1.3v1.3h-1.3zM874.8 222.4h1.6v1.6h-1.6zM884.2 223.6h1.8v1.8h-1.8zM883.8 215.6h1.2v1.2h-1.2zM880.3 218.0h1.9v1.9h-1.9zM893.3 221.9h2.2v2.2h-2.2zM878.5 218.7h1.7v1.7h-1.7zM879.9 224.6h1.7v1.7h-1.7zM880.9 223.8h2.1v2.1h-2.1zM885.8 219.2h2.1v2.1h-2.1zM878.2 215.1h1.4v1.4h-1.4zM883.8 216.2h1.3v1.3h-1.3zM884.7 218.9h1.8v1.8h-1.8zM881.8 213.3h1.7v1.7h-1.7zM880.4 221.4h1.7v1.7h-1.7zM888.0 220.2h2.0v2.0h-2.0zM884.6 221.4h1.6v1.6h-1.6zM884.1 223.5h1.8v1.8h-1.8zM883.5 215.9h1.4v1.4h-1.4zM885.1 218.0h1.6v1.6h-1.6zM885.0 226.2h2.4v2.4h-2.4zM879.4 213.2h1.4v1.4h-1.4zM879.1 219.0h1.3v1.3h-1.3zM875.5 218.0h1.6v1.6h-1.6zM878.1 224.6h1.3v1.3h-1.3zM886.7 227.8h1.9v1.9h-1.9zM878.1 219.8h2.3v2.3h-2.3zM883.2 215.8h1.3v1.3h-1.3zM879.0 229.7h1.5v1.5h-1.5zM883.5 221.5h2.4v2.4h-2.4zM879.1 218.0h2.0v2.0h-2.0zM882.4 225.5h1.4v1.4h-1.4zM878.8 219.9h1.8v1.8h-1.8zM879.9 218.9h2.4v2.4h-2.4zM877.0 221.8h1.9v1.9h-1.9zM881.3 214.0h1.8v1.8h-1.8zM885.1 214.0h1.7v1.7h-1.7zM873.1 217.3h1.8v1.8h-1.8zM879.7 212.1h2.1v2.1h-2.1zM884.1 224.2h1.8v1.8h-1.8zM886.8 223.1h1.8v1.8h-1.8zM889.8 215.2h2.0v2.0h-2.0zM874.6 224.6h1.5v1.5h-1.5zM873.1 217.3h1.3v1.3h-1.3zM886.8 216.3h1.7v1.7h-1.7zM879.9 220.3h1.2v1.2h-1.2zM879.3 225.6h2.3v2.3h-2.3zM878.3 221.5h1.6v1.6h-1.6zM883.1 219.3h2.2v2.2h-2.2zM878.6 221.4h2.3v2.3h-2.3zM882.7 226.7h1.4v1.4h-1.4zM882.8 221.6h2.1v2.1h-2.1zM881.6 224.5h2.1v2.1h-2.1zM882.2 223.8h2.0v2.0h-2.0zM876.9 225.4h2.3v2.3h-2.3zM881.4 224.5h2.3v2.3h-2.3zM880.0 226.9h1.3v1.3h-1.3zM878.3 219.0h1.5v1.5h-1.5zM883.8 222.8h2.1v2.1h-2.1zM880.1 226.2h1.4v1.4h-1.4zM882.0 220.9h1.8v1.8h-1.8zM874.1 227.4h1.8v1.8h-1.8zM875.6 218.9h1.6v1.6h-1.6zM882.0 216.0h1.8v1.8h-1.8zM879.1 216.3h2.3v2.3h-2.3zM881.4 218.5h1.9v1.9h-1.9zM874.6 223.6h2.1v2.1h-2.1zM881.4 225.8h1.5v1.5h-1.5zM879.9 221.0h1.9v1.9h-1.9zM885.7 221.5h1.7v1.7h-1.7zM880.4 228.5h1.3v1.3h-1.3zM876.5 218.8h2.1v2.1h-2.1zM883.1 223.9h1.3v1.3h-1.3zM877.5 217.5h1.5v1.5h-1.5zM887.3 225.1h1.4v1.4h-1.4zM884.3 226.4h2.2v2.2h-2.2zM884.8 222.6h1.6v1.6h-1.6zM882.2 220.8h1.8v1.8h-1.8zM883.2 220.8h1.7v1.7h-1.7zM894.0 224.0h2.1v2.1h-2.1zM881.4 224.2h1.9v1.9h-1.9zM872.0 223.3h1.6v1.6h-1.6zM886.5 220.3h1.2v1.2h-1.2zM880.2 219.8h1.6v1.6h-1.6zM884.5 216.8h2.3v2.3h-2.3zM875.0 226.0h1.7v1.7h-1.7zM881.8 224.8h1.4v1.4h-1.4zM882.4 223.4h1.5v1.5h-1.5zM879.4 225.3h2.4v2.4h-2.4zM882.3 224.0h1.7v1.7h-1.7zM884.5 219.5h2.1v2.1h-2.1zM881.7 220.5h1.6v1.6h-1.6zM888.2 225.3h1.6v1.6h-1.6zM879.7 220.8h1.7v1.7h-1.7zM880.2 217.9h2.1v2.1h-2.1zM882.6 223.3h1.5v1.5h-1.5zM877.7 223.3h2.2v2.2h-2.2zM886.6 221.9h1.9v1.9h-1.9zM884.3 220.5h2.0v2.0h-2.0zM882.3 227.3h2.0v2.0h-2.0zM877.4 222.8h1.3v1.3h-1.3zM877.3 223.7h1.4v1.4h-1.4zM881.1 222.9h1.6v1.6h-1.6zM884.1 225.5h2.0v2.0h-2.0zM880.7 220.1h1.7v1.7h-1.7zM884.8 222.6h1.3v1.3h-1.3zM877.1 218.6h1.6v1.6h-1.6zM884.7 221.6h2.3v2.3h-2.3zM880.6 227.2h1.4v1.4h-1.4zM873.5 214.1h1.6v1.6h-1.6zM887.4 218.4h2.0v2.0h-2.0zM877.5 223.3h1.5v1.5h-1.5zM884.1 224.8h1.6v1.6h-1.6zM883.3 220.7h1.4v1.4h-1.4zM879.8 218.2h1.2v1.2h-1.2zM878.7 222.9h1.8v1.8h-1.8zM875.7 219.2h1.9v1.9h-1.9zM884.5 220.3h1.6v1.6h-1.6zM878.5 227.1h2.0v2.0h-2.0zM888.3 219.2h1.4v1.4h-1.4zM875.9 221.3h1.6v1.6h-1.6zM881.0 215.8h1.5v1.5h-1.5zM882.4 221.6h1.3v1.3h-1.3zM884.3 224.0h2.1v2.1h-2.1zM880.9 226.0h2.2v2.2h-2.2zM880.4 217.9h2.1v2.1h-2.1zM877.6 227.1h2.2v2.2h-2.2zM877.2 219.2h2.0v2.0h-2.0zM884.5 214.4h1.4v1.4h-1.4zM879.4 217.0h2.0v2.0h-2.0zM892.0 215.9h1.3v1.3h-1.3zM881.9 221.8h1.5v1.5h-1.5zM876.6 219.7h1.6v1.6h-1.6zM883.4 213.4h1.5v1.5h-1.5zM876.0 216.2h2.4v2.4h-2.4zM881.9 222.8h2.3v2.3h-2.3zM879.0 220.1h2.0v2.0h-2.0zM881.6 225.8h1.6v1.6h-1.6zM882.4 221.5h2.3v2.3h-2.3zM883.2 222.3h1.8v1.8h-1.8zM883.4 229.1h1.8v1.8h-1.8zM882.4 217.1h1.3v1.3h-1.3zM877.9 216.1h1.5v1.5h-1.5zM889.5 210.9h1.7v1.7h-1.7zM880.6 218.4h1.2v1.2h-1.2zM882.2 222.1h1.6v1.6h-1.6zM879.2 225.7h1.2v1.2h-1.2zM881.6 220.8h1.8v1.8h-1.8zM882.7 214.4h1.7v1.7h-1.7zM884.9 219.7h2.0v2.0h-2.0zM881.7 220.5h1.9v1.9h-1.9zM878.1 223.6h2.0v2.0h-2.0zM877.2 225.5h1.6v1.6h-1.6zM883.9 218.9h1.3v1.3h-1.3zM880.9 218.1h2.1v2.1h-2.1zM878.5 224.6h1.2v1.2h-1.2zM878.1 223.1h1.8v1.8h-1.8zM883.3 229.3h1.6v1.6h-1.6zM890.2 228.8h1.7v1.7h-1.7zM881.8 225.2h2.0v2.0h-2.0zM880.1 227.2h2.3v2.3h-2.3zM878.4 217.9h2.0v2.0h-2.0zM874.8 215.1h2.2v2.2h-2.2zM875.8 220.8h1.3v1.3h-1.3zM879.4 216.7h2.0v2.0h-2.0zM878.8 223.0h1.9v1.9h-1.9zM880.0 220.9h2.0v2.0h-2.0zM868.7 223.6h2.1v2.1h-2.1zM880.0 208.4h1.7v1.7h-1.7zM889.5 230.1h1.8v1.8h-1.8zM884.1 215.9h2.3v2.3h-2.3zM885.3 216.2h1.5v1.5h-1.5zM876.2 222.5h2.2v2.2h-2.2z"/>
<path fill-opacity="0.38" d="M916.0 218.8h1.1v1.1h-1.1zM917.9 226.6h1.1v1.1h-1.1zM907.6 217.3h0.9v0.9h-0.9zM912.7 216.8h0.9v0.9h-0.9zM912.9 218.4h1.1v1.1h-1.1zM920.5 224.7h0.9v0.9h-0.9zM908.8 219.4h1.5v1.5h-1.5zM921.1 221.2h1.6v1.6h-1.6zM907.6 210.6h1.5v1.5h-1.5zM911.2 216.6h0.9v0.9h-0.9zM923.7 226.7h1.2v1.2h-1.2zM917.3 225.7h1.3v1.3h-1.3zM913.7 219.7h1.5v1.5h-1.5zM916.5 220.0h1.3v1.3h-1.3zM921.5 215.5h1.2v1.2h-1.2zM908.7 217.4h1.5v1.5h-1.5zM899.9 219.8h0.8v0.8h-0.8zM925.2 213.6h0.8v0.8h-0.8zM915.5 213.7h0.8v0.8h-0.8zM930.5 214.5h1.1v1.1h-1.1zM913.4 222.0h1.5v1.5h-1.5zM918.5 222.1h1.1v1.1h-1.1zM917.3 220.5h1.0v1.0h-1.0zM912.8 219.6h1.4v1.4h-1.4zM910.8 223.5h0.8v0.8h-0.8zM915.3 224.6h0.9v0.9h-0.9zM911.2 220.6h1.4v1.4h-1.4zM913.2 216.7h1.1v1.1h-1.1zM900.3 222.6h1.5v1.5h-1.5zM924.0 222.8h0.9v0.9h-0.9zM914.2 224.7h1.2v1.2h-1.2zM914.4 225.6h1.4v1.4h-1.4zM907.4 219.6h0.9v0.9h-0.9z"/>
<path fill-opacity="0.62" d="M913.4 226.6h0.9v0.9h-0.9zM912.2 223.9h1.3v1.3h-1.3zM922.7 219.0h1.1v1.1h-1.1zM924.2 220.8h1.4v1.4h-1.4zM905.1 224.4h1.1v1.1h-1.1zM912.3 228.6h1.3v1.3h-1.3zM912.9 221.5h1.1v1.1h-1.1zM918.6 219.1h1.1v1.1h-1.1zM920.0 214.0h1.3v1.3h-1.3zM925.4 226.0h0.9v0.9h-0.9zM908.2 225.5h1.3v1.3h-1.3zM909.4 221.7h1.2v1.2h-1.2zM908.7 207.7h0.9v0.9h-0.9zM916.5 224.7h0.9v0.9h-0.9zM913.8 214.1h0.9v0.9h-0.9zM920.5 221.6h1.2v1.2h-1.2zM923.1 225.5h1.0v1.0h-1.0zM910.0 220.7h1.4v1.4h-1.4zM913.3 221.7h1.0v1.0h-1.0zM917.0 219.1h1.6v1.6h-1.6zM914.1 214.7h0.9v0.9h-0.9zM907.8 214.9h0.8v0.8h-0.8zM911.0 223.1h1.4v1.4h-1.4zM910.7 224.1h1.2v1.2h-1.2zM921.8 222.9h1.2v1.2h-1.2zM915.5 222.8h1.1v1.1h-1.1zM910.7 221.3h1.4v1.4h-1.4zM917.5 221.6h1.0v1.0h-1.0zM916.8 217.0h1.5v1.5h-1.5zM914.4 220.8h1.4v1.4h-1.4zM916.3 216.8h1.4v1.4h-1.4zM908.9 222.4h0.9v0.9h-0.9zM916.6 224.5h0.9v0.9h-0.9zM908.9 218.4h1.1v1.1h-1.1zM918.1 217.8h1.3v1.3h-1.3zM920.3 220.6h1.4v1.4h-1.4zM914.3 227.5h1.3v1.3h-1.3zM920.6 218.6h1.2v1.2h-1.2zM924.1 222.4h1.3v1.3h-1.3zM915.9 219.3h1.4v1.4h-1.4zM912.0 228.6h1.4v1.4h-1.4zM915.0 221.8h1.2v1.2h-1.2zM913.8 223.9h0.9v0.9h-0.9zM914.3 224.2h1.0v1.0h-1.0zM909.2 217.8h1.4v1.4h-1.4zM907.8 213.4h1.4v1.4h-1.4zM921.7 219.4h1.3v1.3h-1.3zM912.2 220.2h1.6v1.6h-1.6zM911.2 220.6h1.2v1.2h-1.2zM911.0 221.0h1.4v1.4h-1.4zM912.6 221.1h1.2v1.2h-1.2zM922.6 220.1h0.9v0.9h-0.9zM919.4 215.6h1.2v1.2h-1.2zM919.5 210.5h1.5v1.5h-1.5zM914.4 226.3h1.2v1.2h-1.2zM916.5 223.0h1.0v1.0h-1.0zM916.7 223.7h1.0v1.0h-1.0zM913.7 215.1h1.4v1.4h-1.4zM924.0 224.2h1.0v1.0h-1.0zM899.4 227.2h1.1v1.1h-1.1zM904.0 222.1h0.8v0.8h-0.8zM922.1 216.7h1.6v1.6h-1.6zM913.7 223.4h0.9v0.9h-0.9zM907.5 219.7h1.4v1.4h-1.4zM911.3 227.3h1.5v1.5h-1.5zM917.9 224.0h1.3v1.3h-1.3zM916.3 220.9h1.4v1.4h-1.4zM906.3 221.0h1.2v1.2h-1.2zM920.1 221.3h0.8v0.8h-0.8zM912.7 224.4h1.5v1.5h-1.5zM908.5 223.5h1.2v1.2h-1.2zM914.1 223.4h1.4v1.4h-1.4zM912.0 219.8h1.6v1.6h-1.6zM922.5 224.5h1.1v1.1h-1.1zM901.4 221.2h1.2v1.2h-1.2zM922.0 221.0h1.0v1.0h-1.0zM910.5 217.7h0.9v0.9h-0.9zM906.5 221.7h1.6v1.6h-1.6zM912.6 221.6h1.4v1.4h-1.4zM909.5 220.9h1.0v1.0h-1.0zM916.2 218.6h1.5v1.5h-1.5zM915.5 230.0h0.8v0.8h-0.8zM928.2 228.2h1.5v1.5h-1.5zM902.0 217.0h1.3v1.3h-1.3zM912.5 216.5h1.1v1.1h-1.1zM908.3 229.0h1.5v1.5h-1.5zM912.6 223.8h1.2v1.2h-1.2zM926.7 222.8h1.2v1.2h-1.2zM914.8 218.0h1.0v1.0h-1.0zM909.7 223.1h1.0v1.0h-1.0zM919.3 222.4h1.4v1.4h-1.4zM913.9 221.1h0.9v0.9h-0.9zM914.5 228.1h1.4v1.4h-1.4zM910.7 224.2h1.2v1.2h-1.2zM908.5 222.3h1.5v1.5h-1.5zM907.7 224.5h1.4v1.4h-1.4zM921.2 221.4h1.4v1.4h-1.4zM919.4 229.3h0.8v0.8h-0.8zM912.6 214.4h1.4v1.4h-1.4zM914.9 227.3h1.2v1.2h-1.2zM918.2 220.8h1.4v1.4h-1.4zM912.8 211.3h1.0v1.0h-1.0zM912.1 222.1h1.3v1.3h-1.3zM908.9 226.4h0.9v0.9h-0.9zM911.7 215.3h1.5v1.5h-1.5zM908.8 225.2h0.9v0.9h-0.9zM924.7 214.3h1.0v1.0h-1.0zM913.3 217.6h1.5v1.5h-1.5zM907.6 218.7h1.6v1.6h-1.6zM922.8 217.9h0.9v0.9h-0.9zM912.0 225.0h1.0v1.0h-1.0zM911.5 224.0h1.0v1.0h-1.0z"/>
<path fill-opacity="0.88" d="M916.6 216.5h1.0v1.0h-1.0zM921.3 215.6h1.2v1.2h-1.2zM920.4 221.8h1.5v1.5h-1.5zM917.8 222.7h1.1v1.1h-1.1zM905.4 215.2h0.9v0.9h-0.9zM917.3 226.4h1.5v1.5h-1.5zM912.7 224.8h0.9v0.9h-0.9zM900.7 220.6h1.1v1.1h-1.1zM915.7 226.2h1.0v1.0h-1.0zM920.4 219.4h1.4v1.4h-1.4zM901.1 224.6h1.0v1.0h-1.0zM926.8 215.1h0.8v0.8h-0.8zM911.1 216.2h1.6v1.6h-1.6zM921.0 220.8h1.5v1.5h-1.5zM907.9 224.4h1.0v1.0h-1.0zM914.9 219.3h0.9v0.9h-0.9zM907.9 216.4h1.0v1.0h-1.0zM926.8 221.8h1.6v1.6h-1.6zM908.1 224.1h1.5v1.5h-1.5zM914.2 221.3h0.9v0.9h-0.9zM917.9 221.3h1.0v1.0h-1.0zM919.1 222.5h0.9v0.9h-0.9zM911.7 225.1h1.3v1.3h-1.3zM922.3 219.3h1.2v1.2h-1.2zM909.0 222.9h0.8v0.8h-0.8zM902.3 215.4h1.1v1.1h-1.1zM911.5 223.5h1.3v1.3h-1.3zM912.2 225.3h1.2v1.2h-1.2zM913.0 226.9h0.9v0.9h-0.9zM917.6 217.9h1.1v1.1h-1.1zM917.1 215.4h0.8v0.8h-0.8zM923.0 222.7h1.2v1.2h-1.2zM914.2 220.3h1.5v1.5h-1.5zM914.8 219.5h0.9v0.9h-0.9zM909.5 230.2h1.2v1.2h-1.2zM916.5 225.0h1.2v1.2h-1.2zM909.7 222.6h1.3v1.3h-1.3zM905.8 221.2h1.1v1.1h-1.1zM922.8 225.0h0.9v0.9h-0.9zM925.3 223.9h1.1v1.1h-1.1zM907.4 223.3h1.2v1.2h-1.2zM915.1 219.1h1.0v1.0h-1.0zM913.3 223.0h1.6v1.6h-1.6zM915.7 215.7h1.5v1.5h-1.5zM912.9 217.5h1.6v1.6h-1.6zM917.5 219.3h1.5v1.5h-1.5zM928.3 224.1h1.1v1.1h-1.1zM915.7 225.4h1.1v1.1h-1.1zM916.6 230.7h0.9v0.9h-0.9zM922.7 222.0h1.6v1.6h-1.6zM910.2 226.3h1.6v1.6h-1.6zM928.0 218.2h1.5v1.5h-1.5zM921.9 221.6h1.3v1.3h-1.3zM912.2 224.2h0.8v0.8h-0.8zM912.0 217.1h1.0v1.0h-1.0zM916.1 217.5h1.0v1.0h-1.0zM914.5 225.9h1.0v1.0h-1.0zM917.6 214.2h1.1v1.1h-1.1zM911.4 223.3h1.3v1.3h-1.3zM918.4 228.9h1.6v1.6h-1.6zM907.4 228.7h0.9v0.9h-0.9zM918.7 220.1h0.9v0.9h-0.9zM912.9 222.5h1.0v1.0h-1.0zM919.3 210.7h1.2v1.2h-1.2zM918.8 217.3h1.0v1.0h-1.0zM918.4 221.8h0.9v0.9h-0.9zM915.3 221.8h1.0v1.0h-1.0zM910.8 218.4h1.2v1.2h-1.2zM918.7 219.5h1.5v1.5h-1.5zM917.6 219.4h1.2v1.2h-1.2zM920.1 214.7h1.0v1.0h-1.0zM908.7 220.9h1.2v1.2h-1.2zM908.1 221.3h1.0v1.0h-1.0zM920.5 214.8h1.6v1.6h-1.6zM910.7 214.4h1.4v1.4h-1.4zM909.1 226.9h1.3v1.3h-1.3zM922.9 218.6h0.9v0.9h-0.9zM918.6 226.7h1.4v1.4h-1.4zM921.9 215.9h1.4v1.4h-1.4zM916.2 218.2h1.3v1.3h-1.3zM918.3 226.3h1.3v1.3h-1.3zM923.0 219.3h1.6v1.6h-1.6zM910.5 224.9h1.6v1.6h-1.6zM918.0 220.5h1.1v1.1h-1.1zM915.6 215.9h1.3v1.3h-1.3zM918.7 219.3h1.2v1.2h-1.2zM919.5 225.1h1.0v1.0h-1.0zM914.2 217.5h1.4v1.4h-1.4zM919.4 224.0h1.3v1.3h-1.3zM907.9 224.3h1.3v1.3h-1.3zM912.2 221.4h1.6v1.6h-1.6zM907.0 221.4h1.1v1.1h-1.1zM918.7 223.3h1.0v1.0h-1.0zM908.8 220.8h1.1v1.1h-1.1zM910.6 218.1h1.0v1.0h-1.0zM905.9 227.0h1.6v1.6h-1.6zM912.6 211.3h1.3v1.3h-1.3zM907.0 223.3h1.0v1.0h-1.0zM898.7 218.3h1.1v1.1h-1.1zM911.8 219.2h1.1v1.1h-1.1zM920.0 214.1h1.1v1.1h-1.1zM908.1 220.2h0.9v0.9h-0.9zM921.9 217.3h1.0v1.0h-1.0zM896.9 218.7h1.3v1.3h-1.3zM916.9 222.1h1.4v1.4h-1.4zM920.0 213.8h1.0v1.0h-1.0zM909.9 221.6h1.2v1.2h-1.2zM916.4 226.5h0.9v0.9h-0.9zM911.5 224.6h1.1v1.1h-1.1zM913.9 218.3h1.5v1.5h-1.5zM915.8 224.8h1.0v1.0h-1.0zM923.9 222.8h0.9v0.9h-0.9zM904.5 230.2h1.3v1.3h-1.3zM917.6 221.7h0.8v0.8h-0.8zM917.1 223.9h1.3v1.3h-1.3z"/>
<path fill-opacity="0.38" d="M949.1 222.3h0.9v0.9h-0.9zM950.6 213.0h0.9v0.9h-0.9zM950.6 220.9h1.4v1.4h-1.4zM951.4 225.8h1.1v1.1h-1.1zM951.8 221.5h1.2v1.2h-1.2zM947.3 220.0h1.1v1.1h-1.1zM951.5 212.1h1.2v1.2h-1.2zM956.0 223.3h0.8v0.8h-0.8zM947.7 225.2h1.3v1.3h-1.3zM945.3 214.8h1.4v1.4h-1.4zM945.4 218.7h1.3v1.3h-1.3zM951.4 222.6h0.9v0.9h-0.9zM956.1 226.7h0.7v0.7h-0.7zM950.4 223.9h0.7v0.7h-0.7zM951.8 216.9h0.8v0.8h-0.8zM952.1 214.3h1.3v1.3h-1.3zM951.5 224.2h0.8v0.8h-0.8zM950.7 229.2h0.8v0.8h-0.8zM945.0 220.7h1.0v1.0h-1.0zM947.0 218.4h0.9v0.9h-0.9zM944.7 227.8h1.3v1.3h-1.3zM951.5 225.8h1.1v1.1h-1.1zM949.3 218.9h1.1v1.1h-1.1zM948.1 217.3h1.3v1.3h-1.3zM945.6 219.1h0.7v0.7h-0.7zM948.0 219.3h1.2v1.2h-1.2zM945.9 223.5h1.0v1.0h-1.0zM948.8 214.3h1.2v1.2h-1.2zM949.6 222.4h1.0v1.0h-1.0zM947.6 223.1h1.1v1.1h-1.1zM949.1 222.5h0.8v0.8h-0.8zM950.2 221.0h1.0v1.0h-1.0zM943.6 214.9h1.0v1.0h-1.0zM943.3 230.3h0.8v0.8h-0.8zM952.5 216.5h0.8v0.8h-0.8zM950.0 227.4h1.1v1.1h-1.1zM954.7 214.8h0.8v0.8h-0.8zM949.0 228.6h0.9v0.9h-0.9zM946.9 211.9h1.0v1.0h-1.0zM946.7 216.5h1.0v1.0h-1.0zM952.0 218.6h1.0v1.0h-1.0zM952.6 227.7h1.3v1.3h-1.3zM946.3 226.4h0.8v0.8h-0.8zM946.1 223.2h1.2v1.2h-1.2zM944.4 212.7h0.9v0.9h-0.9zM953.4 221.6h1.1v1.1h-1.1zM950.4 222.5h1.0v1.0h-1.0zM950.8 210.1h0.8v0.8h-0.8zM951.3 222.0h1.4v1.4h-1.4zM944.8 223.5h1.1v1.1h-1.1zM946.9 215.6h1.1v1.1h-1.1zM946.0 222.1h1.2v1.2h-1.2zM953.1 230.4h1.4v1.4h-1.4zM949.3 209.9h1.4v1.4h-1.4zM943.2 223.5h1.2v1.2h-1.2zM956.1 216.9h0.7v0.7h-0.7zM951.1 216.0h0.8v0.8h-0.8zM949.4 218.6h0.8v0.8h-0.8zM946.2 226.4h1.3v1.3h-1.3zM951.3 219.6h1.4v1.4h-1.4zM952.2 215.6h0.7v0.7h-0.7zM947.5 224.6h0.7v0.7h-0.7zM945.1 221.3h0.9v0.9h-0.9zM948.0 225.8h0.8v0.8h-0.8zM944.4 223.5h0.7v0.7h-0.7zM946.1 232.6h0.7v0.7h-0.7zM948.1 208.7h1.2v1.2h-1.2zM954.5 225.6h1.2v1.2h-1.2zM955.3 214.8h0.9v0.9h-0.9zM952.5 220.7h0.7v0.7h-0.7zM950.6 230.4h1.3v1.3h-1.3zM946.9 214.1h0.8v0.8h-0.8zM946.6 223.7h0.9v0.9h-0.9zM946.2 217.3h0.9v0.9h-0.9zM953.7 204.2h1.0v1.0h-1.0zM946.5 224.0h1.2v1.2h-1.2zM950.6 228.0h0.9v0.9h-0.9zM945.9 220.3h1.1v1.1h-1.1zM954.4 224.8h0.9v0.9h-0.9zM950.6 222.3h1.4v1.4h-1.4zM948.1 221.5h1.2v1.2h-1.2zM940.0 218.8h1.2v1.2h-1.2zM945.4 218.1h1.1v1.1h-1.1z"/>
<path fill-opacity="0.62" d="M949.0 222.1h0.9v0.9h-0.9zM948.8 223.9h1.3v1.3h-1.3zM944.8 214.9h1.2v1.2h-1.2zM945.6 224.1h1.1v1.1h-1.1zM954.2 212.6h1.2v1.2h-1.2zM948.8 214.4h1.0v1.0h-1.0zM951.7 223.0h1.4v1.4h-1.4zM945.6 220.5h1.3v1.3h-1.3zM944.6 216.7h0.8v0.8h-0.8zM953.9 215.7h0.9v0.9h-0.9zM945.5 219.5h1.1v1.1h-1.1zM949.2 225.8h1.3v1.3h-1.3zM952.5 213.3h1.4v1.4h-1.4zM946.3 216.8h1.2v1.2h-1.2zM953.3 223.5h1.0v1.0h-1.0zM949.9 221.4h1.4v1.4h-1.4zM946.3 219.2h0.8v0.8h-0.8zM941.4 223.3h1.1v1.1h-1.1zM945.2 219.7h0.8v0.8h-0.8zM953.1 215.8h1.0v1.0h-1.0zM951.0 219.8h1.0v1.0h-1.0zM946.2 208.0h0.8v0.8h-0.8zM948.5 209.0h1.0v1.0h-1.0zM946.6 228.4h0.8v0.8h-0.8zM956.3 207.2h0.9v0.9h-0.9zM951.1 205.7h0.8v0.8h-0.8zM950.7 222.0h0.7v0.7h-0.7zM947.9 223.5h1.2v1.2h-1.2zM946.0 216.0h0.7v0.7h-0.7zM948.5 229.1h1.1v1.1h-1.1zM951.0 222.2h1.1v1.1h-1.1zM956.1 220.4h0.9v0.9h-0.9zM945.0 221.6h1.0v1.0h-1.0zM948.0 217.9h0.8v0.8h-0.8zM954.1 214.7h0.7v0.7h-0.7zM949.9 222.0h1.2v1.2h-1.2zM954.3 218.4h0.9v0.9h-0.9zM954.9 214.9h0.7v0.7h-0.7zM948.7 210.9h0.9v0.9h-0.9zM951.0 223.1h1.3v1.3h-1.3zM954.4 219.7h0.8v0.8h-0.8zM944.5 216.2h1.2v1.2h-1.2zM956.5 209.9h1.0v1.0h-1.0zM946.1 225.4h1.0v1.0h-1.0zM945.6 210.7h1.0v1.0h-1.0zM950.2 222.6h1.3v1.3h-1.3zM943.2 231.5h1.3v1.3h-1.3zM954.1 228.8h0.8v0.8h-0.8zM947.9 217.9h1.1v1.1h-1.1zM942.7 220.1h1.2v1.2h-1.2zM951.9 223.0h1.2v1.2h-1.2zM950.7 224.0h1.1v1.1h-1.1zM960.8 221.3h1.3v1.3h-1.3zM952.8 217.4h0.8v0.8h-0.8zM944.9 223.6h1.0v1.0h-1.0zM947.0 219.6h0.7v0.7h-0.7zM948.3 222.2h0.8v0.8h-0.8zM946.7 224.8h0.8v0.8h-0.8zM955.8 222.0h0.9v0.9h-0.9zM949.8 211.3h0.9v0.9h-0.9zM949.7 218.1h0.9v0.9h-0.9zM947.9 227.0h1.4v1.4h-1.4zM949.7 218.9h0.9v0.9h-0.9zM944.7 224.9h1.0v1.0h-1.0zM948.8 222.1h1.2v1.2h-1.2zM948.2 221.1h1.3v1.3h-1.3zM950.1 213.5h1.0v1.0h-1.0zM954.1 215.0h1.2v1.2h-1.2zM949.8 219.5h1.2v1.2h-1.2zM941.9 213.4h0.7v0.7h-0.7zM942.1 231.3h0.8v0.8h-0.8zM953.1 228.9h1.0v1.0h-1.0zM953.5 218.1h0.7v0.7h-0.7zM952.1 225.6h0.9v0.9h-0.9zM951.8 224.4h1.0v1.0h-1.0zM943.4 223.2h1.1v1.1h-1.1zM945.8 220.7h1.1v1.1h-1.1zM949.6 219.5h0.7v0.7h-0.7zM940.6 222.0h1.4v1.4h-1.4zM946.3 213.1h1.2v1.2h-1.2zM948.0 219.3h1.3v1.3h-1.3zM950.4 214.7h0.8v0.8h-0.8zM943.7 225.7h1.3v1.3h-1.3zM957.0 222.6h1.1v1.1h-1.1zM944.7 215.4h1.3v1.3h-1.3zM948.7 221.4h1.3v1.3h-1.3zM953.4 220.6h1.3v1.3h-1.3zM947.6 226.7h0.8v0.8h-0.8zM946.3 233.1h0.9v0.9h-0.9zM947.4 213.3h1.3v1.3h-1.3zM955.9 220.3h0.8v0.8h-0.8zM945.8 220.7h1.4v1.4h-1.4zM947.2 228.8h0.9v0.9h-0.9zM948.9 232.2h0.8v0.8h-0.8zM956.7 225.7h1.3v1.3h-1.3z"/>
<path fill-opacity="0.88" d="M945.6 220.6h1.3v1.3h-1.3zM944.1 219.7h1.3v1.3h-1.3zM958.0 208.4h1.3v1.3h-1.3zM940.2 215.6h1.0v1.0h-1.0zM955.1 225.5h0.9v0.9h-0.9zM951.3 221.7h1.0v1.0h-1.0zM948.4 217.3h1.0v1.0h-1.0zM947.9 224.0h1.1v1.1h-1.1zM951.0 227.4h1.0v1.0h-1.0zM949.4 211.4h0.7v0.7h-0.7zM948.3 225.9h1.2v1.2h-1.2zM953.1 212.8h0.8v0.8h-0.8zM957.3 217.7h1.1v1.1h-1.1zM956.6 220.9h1.2v1.2h-1.2zM952.6 221.1h0.9v0.9h-0.9zM942.6 222.1h1.3v1.3h-1.3zM948.4 213.2h1.2v1.2h-1.2zM951.7 212.9h1.1v1.1h-1.1zM946.9 220.4h1.1v1.1h-1.1zM952.8 215.9h1.1v1.1h-1.1zM944.2 206.4h0.9v0.9h-0.9zM941.8 220.6h1.0v1.0h-1.0zM952.3 218.9h0.8v0.8h-0.8zM945.4 216.9h0.9v0.9h-0.9zM950.5 229.3h0.8v0.8h-0.8zM952.2 226.8h1.4v1.4h-1.4zM946.8 225.5h1.3v1.3h-1.3zM949.0 226.2h0.8v0.8h-0.8zM948.8 231.1h0.9v0.9h-0.9zM953.1 222.4h0.9v0.9h-0.9zM954.2 220.6h1.3v1.3h-1.3zM949.3 212.4h1.0v1.0h-1.0zM949.6 215.7h1.3v1.3h-1.3zM954.0 221.1h0.8v0.8h-0.8zM950.7 223.5h0.9v0.9h-0.9zM949.3 229.7h1.2v1.2h-1.2zM952.3 208.5h1.1v1.1h-1.1zM952.2 213.3h0.8v0.8h-0.8zM949.0 213.9h1.3v1.3h-1.3zM943.9 219.4h1.1v1.1h-1.1zM948.0 223.4h1.3v1.3h-1.3zM944.1 224.2h1.4v1.4h-1.4zM949.2 225.5h1.3v1.3h-1.3zM948.8 223.8h1.4v1.4h-1.4zM948.1 214.4h1.2v1.2h-1.2zM946.4 228.7h0.8v0.8h-0.8zM949.7 225.2h1.4v1.4h-1.4zM955.8 215.8h1.3v1.3h-1.3zM947.6 220.0h1.2v1.2h-1.2zM948.3 219.3h1.2v1.2h-1.2zM946.3 213.9h1.3v1.3h-1.3zM954.3 220.3h1.3v1.3h-1.3zM952.5 221.4h0.9v0.9h-0.9zM942.6 226.0h0.9v0.9h-0.9zM947.1 225.0h1.3v1.3h-1.3zM951.0 222.1h1.2v1.2h-1.2zM945.1 215.2h0.8v0.8h-0.8zM959.1 210.7h1.3v1.3h-1.3zM948.0 213.8h0.7v0.7h-0.7zM947.9 211.8h0.9v0.9h-0.9zM947.1 233.2h0.9v0.9h-0.9zM947.3 223.9h0.7v0.7h-0.7z"/>
<circle cx="983" cy="221" r="11" fill="url(#g5)"/>
<path fill-opacity="0.12" d="M983.1 208.3h1.2v1.2h-1.2zM977.3 223.5h1.2v1.2h-1.2zM988.9 224.7h1.0v1.0h-1.0zM984.1 218.1h1.0v1.0h-1.0zM986.0 217.0h1.1v1.1h-1.1zM981.4 221.4h0.9v0.9h-0.9zM988.6 218.9h1.0v1.0h-1.0zM980.7 217.9h0.9v0.9h-0.9zM982.5 224.0h0.9v0.9h-0.9zM994.2 228.3h0.8v0.8h-0.8zM988.6 224.3h0.9v0.9h-0.9zM983.6 215.8h1.0v1.0h-1.0zM982.8 218.4h1.2v1.2h-1.2zM982.3 219.8h1.3v1.3h-1.3zM980.9 215.7h0.9v0.9h-0.9zM973.9 214.4h1.2v1.2h-1.2zM985.0 223.8h0.9v0.9h-0.9z"/>
<path fill-opacity="0.38" d="M983.7 222.2h1.2v1.2h-1.2zM986.6 220.0h0.9v0.9h-0.9zM983.7 221.9h1.1v1.1h-1.1zM980.9 220.6h0.8v0.8h-0.8zM984.0 220.0h1.2v1.2h-1.2zM979.7 213.1h1.2v1.2h-1.2zM981.9 222.5h1.0v1.0h-1.0zM982.3 229.3h0.9v0.9h-0.9zM983.1 220.6h1.1v1.1h-1.1zM980.6 210.3h1.2v1.2h-1.2zM984.6 225.9h1.0v1.0h-1.0zM973.0 229.3h0.9v0.9h-0.9zM985.9 219.9h0.8v0.8h-0.8zM990.0 225.1h1.2v1.2h-1.2zM987.9 225.3h0.9v0.9h-0.9zM985.5 223.9h0.9v0.9h-0.9zM983.5 215.9h1.4v1.4h-1.4zM990.6 214.1h1.0v1.0h-1.0zM989.2 223.6h1.4v1.4h-1.4zM986.6 225.6h0.8v0.8h-0.8zM987.1 223.3h1.3v1.3h-1.3zM984.4 215.3h1.0v1.0h-1.0zM980.8 222.1h1.3v1.3h-1.3zM986.8 216.8h0.9v0.9h-0.9zM986.2 216.0h1.2v1.2h-1.2zM978.7 219.3h1.4v1.4h-1.4zM984.8 219.1h0.8v0.8h-0.8zM983.1 227.2h1.3v1.3h-1.3zM976.7 230.2h1.1v1.1h-1.1zM987.7 226.9h1.0v1.0h-1.0zM974.6 214.6h1.2v1.2h-1.2zM981.0 224.9h1.1v1.1h-1.1zM977.4 214.0h1.2v1.2h-1.2zM977.8 219.4h1.2v1.2h-1.2zM980.5 215.8h1.1v1.1h-1.1zM981.4 226.7h1.1v1.1h-1.1zM986.5 228.1h0.9v0.9h-0.9zM980.3 220.6h1.2v1.2h-1.2zM979.4 217.4h1.2v1.2h-1.2zM976.3 222.5h0.9v0.9h-0.9zM972.5 214.8h1.2v1.2h-1.2zM983.4 217.3h1.0v1.0h-1.0zM988.2 220.4h1.4v1.4h-1.4zM981.6 222.3h0.8v0.8h-0.8zM981.8 214.9h1.3v1.3h-1.3zM982.7 214.9h1.2v1.2h-1.2zM980.1 216.0h0.9v0.9h-0.9zM981.6 216.4h1.4v1.4h-1.4zM985.7 225.7h1.0v1.0h-1.0zM985.1 219.2h1.2v1.2h-1.2zM995.4 221.5h1.3v1.3h-1.3zM979.8 217.2h0.9v0.9h-0.9zM974.5 224.3h0.9v0.9h-0.9zM977.4 222.0h1.3v1.3h-1.3zM978.0 231.0h1.2v1.2h-1.2zM974.4 218.3h0.8v0.8h-0.8zM979.3 221.3h0.9v0.9h-0.9zM978.6 222.8h1.2v1.2h-1.2zM984.0 233.3h1.1v1.1h-1.1zM982.8 228.1h1.1v1.1h-1.1zM978.8 222.7h1.1v1.1h-1.1zM977.5 219.3h1.4v1.4h-1.4zM984.5 217.7h0.8v0.8h-0.8zM974.3 221.3h0.8v0.8h-0.8zM984.5 221.1h1.0v1.0h-1.0zM989.4 219.7h1.3v1.3h-1.3zM988.7 217.4h0.9v0.9h-0.9zM980.8 221.3h1.4v1.4h-1.4zM984.6 226.0h1.3v1.3h-1.3zM981.3 220.0h0.9v0.9h-0.9zM976.1 220.8h0.9v0.9h-0.9zM976.6 217.1h1.4v1.4h-1.4zM988.0 220.9h1.1v1.1h-1.1zM987.9 223.8h0.9v0.9h-0.9zM983.5 216.1h0.9v0.9h-0.9zM989.3 220.8h1.1v1.1h-1.1zM980.5 212.8h1.3v1.3h-1.3zM983.4 218.9h0.9v0.9h-0.9zM975.4 224.4h1.4v1.4h-1.4zM977.5 212.5h1.2v1.2h-1.2zM988.2 221.2h1.1v1.1h-1.1zM982.6 217.6h1.0v1.0h-1.0zM979.1 218.3h1.2v1.2h-1.2zM984.2 215.4h0.9v0.9h-0.9zM982.9 224.8h1.4v1.4h-1.4zM987.2 220.0h0.8v0.8h-0.8zM983.8 228.8h1.3v1.3h-1.3zM974.9 220.6h1.2v1.2h-1.2zM983.7 222.5h0.9v0.9h-0.9zM978.9 218.2h1.2v1.2h-1.2zM980.2 217.3h1.3v1.3h-1.3zM981.2 218.1h1.2v1.2h-1.2zM979.3 218.0h0.9v0.9h-0.9zM979.9 212.1h1.0v1.0h-1.0zM978.4 222.6h1.2v1.2h-1.2zM985.2 216.9h1.1v1.1h-1.1zM982.6 221.5h1.0v1.0h-1.0zM986.4 222.6h1.4v1.4h-1.4zM986.8 213.4h0.9v0.9h-0.9zM981.4 227.5h0.9v0.9h-0.9zM988.5 223.1h1.2v1.2h-1.2zM973.7 226.1h1.2v1.2h-1.2zM985.0 219.0h1.0v1.0h-1.0zM976.9 214.6h1.1v1.1h-1.1zM978.0 221.9h1.0v1.0h-1.0zM981.8 218.4h1.2v1.2h-1.2zM979.7 223.9h1.0v1.0h-1.0z"/>
<path fill-opacity="0.62" d="M975.5 229.2h1.0v1.0h-1.0zM989.5 230.8h1.3v1.3h-1.3zM981.6 220.6h1.0v1.0h-1.0zM986.4 222.5h0.8v0.8h-0.8zM981.5 220.7h1.1v1.1h-1.1zM990.6 228.2h1.3v1.3h-1.3zM977.6 217.4h1.3v1.3h-1.3zM991.9 222.6h1.2v1.2h-1.2zM973.1 221.7h1.3v1.3h-1.3zM974.8 224.8h1.4v1.4h-1.4zM985.9 221.9h1.1v1.1h-1.1zM983.2 221.8h0.8v0.8h-0.8zM981.8 227.0h1.0v1.0h-1.0zM982.5 230.1h1.2v1.2h-1.2zM980.4 218.9h0.9v0.9h-0.9zM990.7 217.5h1.3v1.3h-1.3zM987.2 221.7h1.1v1.1h-1.1zM986.5 224.4h1.3v1.3h-1.3zM982.3 213.9h0.9v0.9h-0.9zM967.8 219.4h0.9v0.9h-0.9zM979.3 217.5h1.3v1.3h-1.3zM982.7 229.9h1.0v1.0h-1.0zM985.3 226.3h1.0v1.0h-1.0zM978.8 220.3h1.0v1.0h-1.0zM983.4 223.3h0.8v0.8h-0.8zM992.6 212.0h1.3v1.3h-1.3zM978.5 222.5h1.2v1.2h-1.2zM983.9 212.9h1.2v1.2h-1.2zM985.3 220.3h1.3v1.3h-1.3zM983.9 217.5h0.8v0.8h-0.8zM986.6 223.5h1.1v1.1h-1.1zM987.7 219.3h0.9v0.9h-0.9zM975.7 219.8h1.0v1.0h-1.0zM977.9 216.8h1.0v1.0h-1.0zM978.0 228.1h0.9v0.9h-0.9zM985.4 224.9h0.9v0.9h-0.9z"/>
<rect x="860.0" y="233.5" width="3.5" height="3.5" fill="#7090ff"/>
<path d="M857.5,234.0h6M860.5,231.0v6" stroke="#000" stroke-width="1.2"/>
<rect x="894.0" y="233.5" width="3.5" height="3.5" fill="#ff6060"/>
<path d="M891.5,234.0h6M894.5,231.0v6" stroke="#000" stroke-width="1.2"/>
<rect x="928.0" y="233.5" width="3.5" height="3.5" fill="#ff6060"/>
<path d="M925.5,234.0h6M928.5,231.0v6" stroke="#000" stroke-width="1.2"/>
<rect x="962.0" y="233.5" width="3.5" height="3.5" fill="#ff6060"/>
<path d="M959.5,234.0h6M962.5,231.0v6" stroke="#000" stroke-width="1.2"/>
<rect x="996.0" y="233.5" width="3.5" height="3.5" fill="#ff6060"/>
<path d="M993.5,234.0h6M996.5,231.0v6" stroke="#000" stroke-width="1.2"/>
<path fill-opacity="0.62" d="M851.5 251.9h1.9v1.9h-1.9zM844.2 257.2h1.9v1.9h-1.9zM839.6 254.2h2.0v2.0h-2.0zM849.9 254.9h1.6v1.6h-1.6zM849.3 255.3h1.8v1.8h-1.8zM848.2 248.4h1.8v1.8h-1.8zM851.0 257.2h1.8v1.8h-1.8zM845.8 258.6h1.2v1.2h-1.2zM852.6 251.8h2.0v2.0h-2.0zM841.7 256.6h1.3v1.3h-1.3zM843.3 257.1h2.1v2.1h-2.1zM850.7 249.6h2.0v2.0h-2.0zM842.1 253.7h1.4v1.4h-1.4zM849.4 259.2h1.8v1.8h-1.8zM846.7 257.1h1.4v1.4h-1.4zM839.2 255.7h2.1v2.1h-2.1zM842.1 249.3h1.3v1.3h-1.3zM851.1 248.6h1.5v1.5h-1.5zM851.8 246.1h2.0v2.0h-2.0zM847.0 253.3h1.4v1.4h-1.4zM857.3 252.1h1.9v1.9h-1.9zM845.6 264.1h2.3v2.3h-2.3zM839.8 251.2h2.1v2.1h-2.1zM844.4 249.5h1.5v1.5h-1.5zM841.9 259.9h1.9v1.9h-1.9zM844.4 262.6h1.4v1.4h-1.4zM843.0 253.4h1.5v1.5h-1.5zM844.6 256.9h2.0v2.0h-2.0zM854.7 249.9h1.8v1.8h-1.8zM847.8 248.8h2.4v2.4h-2.4zM843.2 260.1h1.3v1.3h-1.3zM848.4 247.3h1.9v1.9h-1.9zM848.2 255.5h1.7v1.7h-1.7zM848.5 253.6h2.1v2.1h-2.1zM842.8 251.5h1.6v1.6h-1.6zM844.7 251.8h1.8v1.8h-1.8zM843.8 253.2h1.9v1.9h-1.9zM848.9 257.5h2.0v2.0h-2.0zM849.9 252.2h1.7v1.7h-1.7zM835.2 257.3h1.4v1.4h-1.4zM840.4 252.0h1.4v1.4h-1.4zM852.9 247.6h2.2v2.2h-2.2zM843.7 252.9h1.5v1.5h-1.5zM851.7 254.2h1.6v1.6h-1.6zM847.8 249.6h2.1v2.1h-2.1zM841.4 252.2h2.3v2.3h-2.3zM841.2 258.4h1.8v1.8h-1.8zM842.7 246.5h2.4v2.4h-2.4zM838.3 248.7h2.3v2.3h-2.3zM854.4 251.9h1.5v1.5h-1.5zM848.7 257.3h1.9v1.9h-1.9zM851.1 258.0h2.4v2.4h-2.4zM848.5 248.0h2.0v2.0h-2.0zM849.0 260.1h2.1v2.1h-2.1zM850.5 256.2h1.7v1.7h-1.7zM846.6 254.5h2.3v2.3h-2.3zM846.5 251.7h1.9v1.9h-1.9zM840.3 252.1h2.3v2.3h-2.3zM845.1 256.7h2.1v2.1h-2.1zM846.8 258.9h2.1v2.1h-2.1zM843.5 255.0h1.5v1.5h-1.5zM849.0 260.0h1.2v1.2h-1.2zM849.0 252.3h1.4v1.4h-1.4zM850.9 257.4h1.5v1.5h-1.5zM854.6 253.7h2.1v2.1h-2.1zM859.3 252.2h2.0v2.0h-2.0zM849.2 246.4h2.0v2.0h-2.0zM839.6 259.8h1.4v1.4h-1.4zM846.4 255.3h1.7v1.7h-1.7zM855.7 252.3h1.8v1.8h-1.8zM846.3 262.2h1.6v1.6h-1.6zM853.8 261.2h2.4v2.4h-2.4zM852.7 256.6h2.0v2.0h-2.0zM844.4 258.5h2.2v2.2h-2.2zM855.2 260.3h1.6v1.6h-1.6zM843.6 250.2h1.4v1.4h-1.4zM838.2 259.6h1.3v1.3h-1.3zM846.0 249.7h2.1v2.1h-2.1zM853.4 251.6h2.0v2.0h-2.0zM843.2 248.4h2.3v2.3h-2.3zM838.6 255.7h1.4v1.4h-1.4zM848.4 247.0h2.1v2.1h-2.1zM846.1 253.9h1.8v1.8h-1.8zM857.6 253.0h1.4v1.4h-1.4zM857.7 251.6h2.2v2.2h-2.2zM837.1 249.1h1.9v1.9h-1.9zM847.4 253.4h1.6v1.6h-1.6zM843.0 245.5h2.2v2.2h-2.2zM854.4 255.4h2.2v2.2h-2.2zM851.8 247.5h1.4v1.4h-1.4zM849.0 262.9h2.3v2.3h-2.3zM844.0 255.8h2.2v2.2h-2.2zM848.1 253.3h2.3v2.3h-2.3zM847.4 252.8h1.4v1.4h-1.4zM840.0 260.1h2.2v2.2h-2.2zM850.4 247.6h1.4v1.4h-1.4zM840.5 257.2h2.1v2.1h-2.1zM844.5 254.0h1.6v1.6h-1.6zM848.0 253.8h1.8v1.8h-1.8zM845.7 264.8h1.5v1.5h-1.5zM842.6 250.3h1.5v1.5h-1.5zM845.9 252.1h1.8v1.8h-1.8zM845.3 251.7h1.6v1.6h-1.6zM848.3 252.8h2.3v2.3h-2.3zM851.5 258.9h1.6v1.6h-1.6zM849.5 249.2h2.0v2.0h-2.0zM851.6 256.6h2.0v2.0h-2.0zM850.5 254.6h2.4v2.4h-2.4zM845.0 252.4h1.7v1.7h-1.7zM851.0 257.5h2.0v2.0h-2.0zM852.3 252.1h2.2v2.2h-2.2zM849.7 251.8h2.1v2.1h-2.1zM846.4 257.1h1.5v1.5h-1.5zM846.7 258.0h1.8v1.8h-1.8zM836.1 263.9h1.6v1.6h-1.6zM841.0 261.9h1.4v1.4h-1.4zM841.7 251.4h2.1v2.1h-2.1zM848.5 260.0h2.3v2.3h-2.3zM853.1 248.5h1.8v1.8h-1.8zM842.8 266.7h2.0v2.0h-2.0zM842.0 253.3h1.9v1.9h-1.9zM851.5 250.9h2.2v2.2h-2.2zM852.8 251.8h1.8v1.8h-1.8zM843.3 255.0h1.7v1.7h-1.7zM855.6 259.9h1.6v1.6h-1.6zM843.2 252.8h2.1v2.1h-2.1zM845.6 250.5h2.0v2.0h-2.0zM845.0 250.9h1.7v1.7h-1.7zM854.7 260.2h2.2v2.2h-2.2zM849.0 261.5h2.0v2.0h-2.0zM849.7 256.4h2.1v2.1h-2.1zM839.1 261.8h1.7v1.7h-1.7zM844.4 250.4h2.1v2.1h-2.1zM844.7 254.8h2.3v2.3h-2.3zM847.8 250.1h1.7v1.7h-1.7zM854.5 259.1h1.6v1.6h-1.6zM843.5 251.1h1.2v1.2h-1.2zM843.7 247.1h2.4v2.4h-2.4zM847.5 249.6h1.8v1.8h-1.8zM845.6 248.7h2.1v2.1h-2.1zM851.2 258.0h2.1v2.1h-2.1zM841.9 252.3h1.9v1.9h-1.9zM841.3 261.0h1.5v1.5h-1.5zM856.0 251.2h2.0v2.0h-2.0zM849.7 253.0h2.1v2.1h-2.1zM850.0 260.5h1.7v1.7h-1.7zM849.7 252.9h1.5v1.5h-1.5zM845.6 256.9h2.1v2.1h-2.1zM844.5 253.4h1.6v1.6h-1.6zM845.2 253.1h1.6v1.6h-1.6zM852.6 255.7h1.4v1.4h-1.4zM845.3 253.9h1.2v1.2h-1.2zM849.1 256.2h1.6v1.6h-1.6zM843.5 246.1h1.4v1.4h-1.4zM849.5 256.9h2.3v2.3h-2.3zM840.3 251.2h2.1v2.1h-2.1zM845.8 254.0h1.5v1.5h-1.5zM845.0 252.1h1.4v1.4h-1.4zM846.6 247.0h1.6v1.6h-1.6zM846.0 260.0h1.9v1.9h-1.9zM850.5 248.1h1.2v1.2h-1.2zM847.9 251.9h2.3v2.3h-2.3zM847.4 247.8h1.7v1.7h-1.7zM839.3 255.8h1.4v1.4h-1.4zM840.8 246.8h1.5v1.5h-1.5zM858.6 251.3h2.0v2.0h-2.0zM843.2 253.5h1.5v1.5h-1.5zM844.5 247.5h1.5v1.5h-1.5zM853.1 253.7h2.0v2.0h-2.0zM854.1 251.3h1.8v1.8h-1.8zM849.5 258.3h1.8v1.8h-1.8zM845.3 253.3h1.6v1.6h-1.6zM852.2 253.9h1.6v1.6h-1.6zM853.2 266.4h1.5v1.5h-1.5zM842.2 240.7h2.0v2.0h-2.0zM852.3 258.7h2.0v2.0h-2.0zM846.5 254.6h2.4v2.4h-2.4zM847.2 254.9h1.4v1.4h-1.4zM850.1 253.6h2.0v2.0h-2.0zM850.0 261.8h1.3v1.3h-1.3zM842.4 254.1h2.3v2.3h-2.3zM852.2 262.2h2.2v2.2h-2.2zM849.1 256.9h1.4v1.4h-1.4zM843.4 253.0h1.5v1.5h-1.5zM845.2 248.0h2.0v2.0h-2.0zM849.0 255.6h1.3v1.3h-1.3zM839.6 244.1h1.9v1.9h-1.9zM846.7 258.1h1.3v1.3h-1.3zM846.6 258.5h1.8v1.8h-1.8zM845.9 253.9h1.7v1.7h-1.7z"/>
<path fill-opacity="0.88" d="M842.4 260.0h1.7v1.7h-1.7zM852.5 248.8h2.2v2.2h-2.2zM847.0 252.1h1.7v1.7h-1.7zM850.7 248.3h1.4v1.4h-1.4zM847.6 260.6h1.7v1.7h-1.7zM843.4 255.2h1.6v1.6h-1.6zM844.9 256.9h1.8v1.8h-1.8zM848.8 253.3h1.6v1.6h-1.6zM846.5 256.3h1.2v1.2h-1.2zM847.1 251.2h1.3v1.3h-1.3zM855.8 255.5h1.7v1.7h-1.7zM857.0 259.1h2.3v2.3h-2.3zM839.5 251.9h1.9v1.9h-1.9zM850.2 260.1h1.7v1.7h-1.7zM850.9 255.0h1.3v1.3h-1.3zM843.1 254.5h2.1v2.1h-2.1zM858.9 256.8h2.3v2.3h-2.3zM840.9 256.6h1.7v1.7h-1.7zM843.1 259.8h1.4v1.4h-1.4zM846.4 251.2h1.8v1.8h-1.8zM841.0 249.0h2.1v2.1h-2.1zM843.3 254.7h1.9v1.9h-1.9zM841.1 244.7h1.9v1.9h-1.9zM848.6 248.4h1.2v1.2h-1.2zM850.4 247.9h1.4v1.4h-1.4zM842.7 248.4h1.5v1.5h-1.5zM842.3 256.5h2.3v2.3h-2.3zM854.1 257.3h2.1v2.1h-2.1zM852.9 259.3h1.4v1.4h-1.4zM846.8 251.7h1.2v1.2h-1.2zM848.2 253.7h1.4v1.4h-1.4zM847.3 250.2h1.3v1.3h-1.3zM846.6 247.1h2.2v2.2h-2.2zM833.8 253.8h1.8v1.8h-1.8zM841.5 247.6h1.9v1.9h-1.9zM853.4 255.2h1.9v1.9h-1.9zM854.9 256.9h2.1v2.1h-2.1zM847.4 252.3h1.5v1.5h-1.5zM845.5 254.5h1.2v1.2h-1.2zM842.2 250.3h1.3v1.3h-1.3zM842.4 254.5h1.9v1.9h-1.9zM845.9 260.5h1.5v1.5h-1.5zM848.8 260.2h2.1v2.1h-2.1zM836.6 252.0h2.4v2.4h-2.4zM847.9 255.9h2.0v2.0h-2.0zM846.3 255.4h1.3v1.3h-1.3zM846.8 254.6h2.4v2.4h-2.4zM840.2 255.2h1.2v1.2h-1.2zM854.2 258.4h2.3v2.3h-2.3zM844.9 253.6h2.1v2.1h-2.1zM855.7 260.6h1.5v1.5h-1.5zM845.5 249.6h1.9v1.9h-1.9zM851.5 256.3h1.6v1.6h-1.6zM845.2 253.8h1.4v1.4h-1.4zM846.5 252.5h2.2v2.2h-2.2zM844.2 251.8h1.2v1.2h-1.2zM844.6 260.0h1.9v1.9h-1.9zM852.9 256.2h1.3v1.3h-1.3zM849.6 253.3h2.4v2.4h-2.4zM850.3 255.5h1.2v1.2h-1.2zM843.5 254.4h2.3v2.3h-2.3zM838.4 254.0h1.6v1.6h-1.6zM849.3 258.4h1.3v1.3h-1.3zM846.9 259.6h2.2v2.2h-2.2zM853.5 249.8h2.0v2.0h-2.0zM843.1 244.0h1.9v1.9h-1.9zM849.1 259.3h1.6v1.6h-1.6zM846.8 253.8h1.5v1.5h-1.5zM842.2 242.0h1.3v1.3h-1.3zM842.0 249.7h1.8v1.8h-1.8zM856.7 253.3h1.7v1.7h-1.7zM847.8 257.4h2.2v2.2h-2.2zM847.8 259.5h2.3v2.3h-2.3zM850.9 253.2h1.9v1.9h-1.9zM845.9 258.0h2.3v2.3h-2.3zM849.1 253.7h2.0v2.0h-2.0zM848.2 255.6h2.0v2.0h-2.0zM838.4 252.1h1.2v1.2h-1.2zM848.2 246.3h1.6v1.6h-1.6zM848.6 253.4h1.3v1.3h-1.3zM849.6 253.2h1.4v1.4h-1.4zM847.9 255.7h2.0v2.0h-2.0zM839.8 246.0h1.4v1.4h-1.4zM840.9 261.0h1.9v1.9h-1.9zM857.3 247.9h1.4v1.4h-1.4zM852.3 257.1h1.5v1.5h-1.5zM846.3 259.8h1.3v1.3h-1.3zM844.9 253.6h1.5v1.5h-1.5zM847.7 257.0h1.7v1.7h-1.7zM838.9 257.3h1.8v1.8h-1.8zM846.7 257.0h2.2v2.2h-2.2zM837.9 253.5h2.2v2.2h-2.2zM848.1 254.1h1.6v1.6h-1.6zM851.5 254.2h1.4v1.4h-1.4zM848.0 258.1h1.4v1.4h-1.4zM852.7 255.8h1.8v1.8h-1.8zM855.8 253.9h1.5v1.5h-1.5zM846.0 253.1h1.4v1.4h-1.4zM850.7 252.4h2.1v2.1h-2.1zM841.1 254.4h2.3v2.3h-2.3zM841.3 256.8h1.4v1.4h-1.4zM839.6 251.2h1.7v1.7h-1.7zM846.7 262.0h1.3v1.3h-1.3zM844.2 253.2h2.2v2.2h-2.2zM848.9 246.6h1.9v1.9h-1.9zM843.6 262.1h2.1v2.1h-2.1zM857.1 255.3h2.1v2.1h-2.1zM845.7 246.6h1.8v1.8h-1.8zM840.3 246.7h1.4v1.4h-1.4zM845.5 259.4h2.1v2.1h-2.1zM854.9 249.0h2.4v2.4h-2.4zM846.8 251.9h1.7v1.7h-1.7zM852.2 256.9h1.6v1.6h-1.6zM844.5 247.9h1.8v1.8h-1.8zM848.1 250.0h1.6v1.6h-1.6zM844.7 261.8h1.3v1.3h-1.3zM845.4 252.4h1.6v1.6h-1.6zM842.9 250.5h1.2v1.2h-1.2zM849.5 251.1h1.4v1.4h-1.4zM847.3 256.2h1.3v1.3h-1.3zM853.1 248.4h1.9v1.9h-1.9zM849.2 250.9h1.7v1.7h-1.7zM850.6 256.3h1.5v1.5h-1.5zM847.6 256.1h1.6v1.6h-1.6zM848.2 250.2h2.1v2.1h-2.1zM846.3 253.0h1.6v1.6h-1.6zM844.3 256.7h2.4v2.4h-2.4zM845.2 248.8h1.9v1.9h-1.9zM846.4 257.9h1.5v1.5h-1.5zM849.0 255.3h1.8v1.8h-1.8zM848.8 255.6h1.6v1.6h-1.6zM847.4 255.9h1.3v1.3h-1.3zM847.6 253.4h1.4v1.4h-1.4zM845.8 242.8h2.3v2.3h-2.3zM847.6 245.6h2.0v2.0h-2.0zM837.8 257.2h2.1v2.1h-2.1zM854.4 250.8h1.5v1.5h-1.5zM847.4 253.6h2.3v2.3h-2.3zM848.4 260.9h2.2v2.2h-2.2zM849.0 252.7h1.5v1.5h-1.5zM849.1 246.4h2.4v2.4h-2.4zM839.3 252.5h2.2v2.2h-2.2zM843.3 248.4h1.4v1.4h-1.4zM845.2 248.2h2.3v2.3h-2.3zM845.1 242.4h1.6v1.6h-1.6zM845.5 254.9h2.2v2.2h-2.2zM847.4 253.0h1.2v1.2h-1.2zM846.8 249.5h2.1v2.1h-2.1zM851.9 256.3h1.7v1.7h-1.7zM840.1 251.5h1.7v1.7h-1.7zM845.4 265.7h1.7v1.7h-1.7zM854.3 252.4h1.6v1.6h-1.6zM835.2 253.9h1.8v1.8h-1.8zM844.3 247.8h1.4v1.4h-1.4zM844.5 256.7h2.4v2.4h-2.4zM835.2 257.8h2.1v2.1h-2.1zM842.7 257.1h1.8v1.8h-1.8zM844.2 253.4h1.4v1.4h-1.4zM842.1 253.5h1.8v1.8h-1.8zM844.2 248.2h1.3v1.3h-1.3zM847.0 260.3h1.8v1.8h-1.8zM854.7 252.3h1.9v1.9h-1.9zM852.9 259.1h1.4v1.4h-1.4zM843.7 252.1h2.2v2.2h-2.2zM840.8 250.9h1.9v1.9h-1.9zM842.7 255.7h2.1v2.1h-2.1zM836.8 251.5h2.2v2.2h-2.2zM838.5 257.2h1.9v1.9h-1.9zM848.9 248.3h1.9v1.9h-1.9zM854.6 249.0h1.4v1.4h-1.4zM845.0 249.9h2.1v2.1h-2.1zM845.0 248.7h2.0v2.0h-2.0zM851.2 250.5h1.7v1.7h-1.7zM845.8 260.1h2.2v2.2h-2.2zM842.1 247.5h1.7v1.7h-1.7zM845.1 251.3h2.1v2.1h-2.1zM842.4 250.3h1.8v1.8h-1.8zM840.8 248.4h2.1v2.1h-2.1zM850.8 253.0h1.8v1.8h-1.8zM849.7 253.5h1.5v1.5h-1.5zM844.1 257.4h1.4v1.4h-1.4zM841.1 256.2h1.5v1.5h-1.5zM852.8 258.6h1.3v1.3h-1.3zM841.6 264.5h1.7v1.7h-1.7zM850.6 254.9h1.6v1.6h-1.6zM844.0 256.8h1.8v1.8h-1.8zM849.4 259.3h1.9v1.9h-1.9zM846.7 248.7h1.5v1.5h-1.5zM850.0 256.8h1.7v1.7h-1.7zM849.3 263.2h1.6v1.6h-1.6zM839.5 252.0h2.2v2.2h-2.2zM841.3 258.8h2.2v2.2h-2.2zM852.1 247.7h1.7v1.7h-1.7zM844.7 253.8h2.3v2.3h-2.3zM842.9 254.0h1.8v1.8h-1.8zM842.1 252.4h2.1v2.1h-2.1zM841.9 256.6h2.1v2.1h-2.1zM846.1 253.0h1.9v1.9h-1.9zM849.8 256.2h2.1v2.1h-2.1zM852.5 250.1h2.0v2.0h-2.0zM845.0 257.6h1.5v1.5h-1.5zM845.5 251.9h2.0v2.0h-2.0zM847.9 254.4h1.9v1.9h-1.9zM841.6 252.2h1.7v1.7h-1.7zM852.5 250.6h2.1v2.1h-2.1zM851.6 250.1h1.9v1.9h-1.9zM851.1 256.1h1.2v1.2h-1.2zM848.2 253.3h1.3v1.3h-1.3zM843.2 253.8h1.8v1.8h-1.8zM849.1 251.0h1.9v1.9h-1.9zM850.9 250.1h2.2v2.2h-2.2zM842.9 256.7h2.4v2.4h-2.4zM838.8 252.4h1.9v1.9h-1.9zM845.4 245.2h2.1v2.1h-2.1zM847.1 251.7h1.6v1.6h-1.6zM844.0 253.4h2.2v2.2h-2.2zM851.8 254.4h1.2v1.2h-1.2zM852.8 249.0h1.2v1.2h-1.2zM846.4 260.9h2.1v2.1h-2.1zM851.3 246.1h1.4v1.4h-1.4zM845.7 252.9h2.3v2.3h-2.3zM846.0 251.7h2.0v2.0h-2.0zM843.7 254.6h1.4v1.4h-1.4zM840.7 249.2h2.1v2.1h-2.1zM843.1 252.7h2.0v2.0h-2.0zM850.2 254.8h1.2v1.2h-1.2zM839.8 260.8h1.3v1.3h-1.3zM838.0 259.6h1.5v1.5h-1.5zM851.4 251.1h2.2v2.2h-2.2zM842.5 260.2h2.0v2.0h-2.0zM849.1 254.0h2.2v2.2h-2.2zM842.4 245.6h1.7v1.7h-1.7zM845.1 248.7h2.1v2.1h-2.1zM838.2 256.2h1.2v1.2h-1.2zM844.3 257.7h2.0v2.0h-2.0zM846.3 256.7h1.7v1.7h-1.7zM854.6 253.8h2.0v2.0h-2.0zM849.4 252.5h1.4v1.4h-1.4zM852.8 254.7h1.7v1.7h-1.7zM844.6 251.6h1.3v1.3h-1.3zM851.9 264.2h2.2v2.2h-2.2zM844.8 258.0h2.3v2.3h-2.3zM853.8 255.6h1.5v1.5h-1.5zM846.2 258.0h2.1v2.1h-2.1zM836.0 256.7h2.1v2.1h-2.1zM850.7 253.8h1.4v1.4h-1.4zM848.0 246.4h1.8v1.8h-1.8zM841.2 264.1h2.1v2.1h-2.1zM836.6 251.3h1.8v1.8h-1.8zM835.9 258.1h1.6v1.6h-1.6zM841.4 251.8h2.2v2.2h-2.2zM850.1 260.8h1.8v1.8h-1.8zM854.9 261.0h2.4v2.4h-2.4zM851.0 256.4h1.6v1.6h-1.6zM849.3 255.1h2.3v2.3h-2.3zM847.6 259.2h1.6v1.6h-1.6zM850.5 261.1h2.3v2.3h-2.3zM855.5 251.8h1.8v1.8h-1.8zM845.3 249.7h1.3v1.3h-1.3zM849.9 247.4h1.2v1.2h-1.2zM847.8 260.6h2.1v2.1h-2.1zM849.7 250.3h1.8v1.8h-1.8zM849.4 259.1h1.2v1.2h-1.2zM852.6 251.3h1.6v1.6h-1.6zM841.4 253.9h2.0v2.0h-2.0zM857.2 245.6h2.4v2.4h-2.4zM849.8 249.7h1.2v1.2h-1.2zM848.8 250.7h2.2v2.2h-2.2zM845.6 251.5h1.5v1.5h-1.5zM849.8 258.1h1.3v1.3h-1.3zM849.1 258.1h2.4v2.4h-2.4zM850.8 259.5h1.5v1.5h-1.5zM848.0 255.9h1.3v1.3h-1.3zM846.1 253.8h1.6v1.6h-1.6zM848.8 262.9h1.2v1.2h-1.2zM844.2 252.6h2.4v2.4h-2.4zM852.5 259.9h1.2v1.2h-1.2zM851.5 245.9h1.5v1.5h-1.5zM845.5 256.9h1.5v1.5h-1.5zM858.9 257.5h1.5v1.5h-1.5zM840.6 262.6h1.9v1.9h-1.9zM849.1 247.6h1.8v1.8h-1.8zM844.5 251.3h2.4v2.4h-2.4zM842.3 248.0h1.5v1.5h-1.5zM850.4 249.9h1.9v1.9h-1.9zM847.0 255.5h1.4v1.4h-1.4zM844.5 255.4h1.5v1.5h-1.5zM846.1 251.9h1.4v1.4h-1.4zM844.0 253.6h2.0v2.0h-2.0zM846.0 254.4h1.5v1.5h-1.5zM849.5 256.1h1.6v1.6h-1.6zM846.1 256.7h1.6v1.6h-1.6zM844.9 256.8h1.2v1.2h-1.2zM845.9 257.6h2.2v2.2h-2.2zM845.3 253.4h2.2v2.2h-2.2zM850.9 254.4h2.2v2.2h-2.2zM850.3 254.4h2.0v2.0h-2.0zM850.4 251.6h1.6v1.6h-1.6zM840.5 252.2h1.3v1.3h-1.3zM852.3 261.2h2.1v2.1h-2.1zM838.9 243.6h2.2v2.2h-2.2zM853.2 255.7h2.4v2.4h-2.4zM844.8 257.1h2.3v2.3h-2.3zM841.5 255.3h1.6v1.6h-1.6zM848.6 262.5h2.1v2.1h-2.1zM849.2 255.1h2.2v2.2h-2.2zM847.5 261.1h2.1v2.1h-2.1zM849.1 256.5h1.3v1.3h-1.3zM842.3 259.8h1.4v1.4h-1.4zM846.3 259.1h1.9v1.9h-1.9zM846.3 252.1h2.2v2.2h-2.2zM848.4 261.4h2.0v2.0h-2.0zM850.9 251.6h1.7v1.7h-1.7zM847.1 250.9h2.0v2.0h-2.0zM842.0 257.6h2.0v2.0h-2.0zM843.4 257.0h1.4v1.4h-1.4zM842.9 261.4h1.3v1.3h-1.3zM849.7 255.9h1.4v1.4h-1.4zM847.4 253.0h1.2v1.2h-1.2zM841.2 255.7h2.2v2.2h-2.2zM855.4 263.5h1.8v1.8h-1.8zM856.6 258.4h1.7v1.7h-1.7zM856.4 264.1h1.2v1.2h-1.2zM850.8 255.1h1.8v1.8h-1.8zM846.0 257.7h1.8v1.8h-1.8zM842.7 250.4h1.5v1.5h-1.5zM851.8 251.4h2.1v2.1h-2.1zM841.2 254.8h2.3v2.3h-2.3zM851.1 250.8h1.6v1.6h-1.6zM850.4 257.2h1.3v1.3h-1.3z"/>
<path d="M867,243L870,250" stroke="#777" stroke-width="1.8"/>
<path d="M900,264V268H896Z" fill="#ff6060"/>
<circle cx="916.0" cy="243.0" r="1.2" fill-opacity="0.8"/>
<circle cx="905.0" cy="257.0" r="1.0" fill-opacity="0.8"/>
<circle cx="912.0" cy="256.0" r="1.5" fill-opacity="0.8"/>
<circle cx="919.0" cy="252.0" r="1.3" fill-opacity="0.8"/>
<circle cx="915.0" cy="261.0" r="1.6" fill-opacity="0.8"/>
<circle cx="907.0" cy="262.0" r="0.9" fill-opacity="0.8"/>
<circle cx="925.0" cy="249.0" r="1.1" fill-opacity="0.8"/>
<circle cx="922.0" cy="260.0" r="1.2" fill-opacity="0.8"/>
<circle cx="948.5" cy="240.3" r="0.7"/>
<circle cx="954.6" cy="246.1" r="1.0"/>
<circle cx="937.1" cy="257.8" r="1.0"/>
<circle cx="964.0" cy="249.5" r="0.9"/>
<circle cx="941.8" cy="252.5" r="1.3"/>
<circle cx="953.3" cy="249.2" r="0.9"/>
<circle cx="944.8" cy="262.1" r="1.1"/>
<circle cx="942.8" cy="249.0" r="1.1"/>
<circle cx="957.0" cy="254.3" r="1.2"/>
<circle cx="947.4" cy="243.1" r="0.8"/>
<circle cx="965.5" cy="247.0" r="1.1"/>
<circle cx="951.0" cy="250.4" r="0.8"/>
<circle cx="950.8" cy="261.3" r="1.3"/>
<circle cx="939.4" cy="265.3" r="1.3"/>
<circle cx="950.6" cy="254.4" r="1.4"/>
<circle cx="936.8" cy="254.0" r="1.3"/>
<circle cx="948.6" cy="255.0" r="1.3"/>
<circle cx="955.4" cy="251.5" r="1.1"/>
<circle cx="965.5" cy="255.0" r="1.1"/>
<circle cx="959.6" cy="252.7" r="0.9"/>
<circle cx="952.6" cy="260.5" r="1.3"/>
<circle cx="940.5" cy="252.4" r="0.8"/>
<circle cx="952.1" cy="257.5" r="0.8"/>
<circle cx="932.6" cy="256.5" r="0.8"/>
<circle cx="950.6" cy="263.8" r="1.4"/>
<circle cx="949.5" cy="259.0" r="0.9"/>
<rect x="969.1" y="240.2" width="1.5" height="1.5"/>
<rect x="970.0" y="250.3" width="1.5" height="1.5"/>
<rect x="969.2" y="259.9" width="1.5" height="1.5"/>
<rect x="971.2" y="263.5" width="1.5" height="1.5"/>
<rect x="977.6" y="245.6" width="1.5" height="1.5"/>
<rect x="975.5" y="250.4" width="1.5" height="1.5"/>
<rect x="976.9" y="254.2" width="1.5" height="1.5"/>
<rect x="976.0" y="258.8" width="1.5" height="1.5"/>
<rect x="977.2" y="264.3" width="1.5" height="1.5"/>
<rect x="981.1" y="246.4" width="1.5" height="1.5"/>
<rect x="980.8" y="250.0" width="1.5" height="1.5"/>
<rect x="981.0" y="254.2" width="1.5" height="1.5"/>
<rect x="982.1" y="264.3" width="1.5" height="1.5"/>
<rect x="984.5" y="242.0" width="1.5" height="1.5"/>
<rect x="986.0" y="245.5" width="1.5" height="1.5"/>
<rect x="984.4" y="250.1" width="1.5" height="1.5"/>
<rect x="987.9" y="254.8" width="1.5" height="1.5"/>
<rect x="985.1" y="259.6" width="1.5" height="1.5"/>
<rect x="990.5" y="241.4" width="1.5" height="1.5"/>
<rect x="989.1" y="249.8" width="1.5" height="1.5"/>
<rect x="992.3" y="255.6" width="1.5" height="1.5"/>
<rect x="990.3" y="259.5" width="1.5" height="1.5"/>
<rect x="992.1" y="264.6" width="1.5" height="1.5"/>
<rect x="994.9" y="241.3" width="1.5" height="1.5"/>
<rect x="997.1" y="246.4" width="1.5" height="1.5"/>
<rect x="997.9" y="255.1" width="1.5" height="1.5"/>
<rect x="994.9" y="259.3" width="1.5" height="1.5"/>
<rect x="996.7" y="264.6" width="1.5" height="1.5"/>
<rect x="860.0" y="267.5" width="3.5" height="3.5" fill="#ff6060"/>
<path d="M857.5,268.0h6M860.5,265.0v6" stroke="#000" stroke-width="1.2"/>
<path d="M925.5,268.0h6M928.5,265.0v6" stroke="#000" stroke-width="1.2"/>
<path d="M959.5,268.0h6M962.5,265.0v6" stroke="#000" stroke-width="1.2"/>
<circle cx="841.5" cy="289.4" r="2.9" fill="none" stroke="#000" stroke-width="0.8" stroke-opacity="0.8"/>
<circle cx="851.7" cy="279.1" r="2.9" fill="none" stroke="#000" stroke-width="0.8" stroke-opacity="0.8"/>
<circle cx="847.0" cy="287.1" r="1.7" fill="none" stroke="#000" stroke-width="0.8" stroke-opacity="0.8"/>
<circle cx="852.1" cy="290.0" r="1.7" fill="none" stroke="#000" stroke-width="0.8" stroke-opacity="0.8"/>
<circle cx="838.7" cy="288.4" r="2.4" fill="none" stroke="#000" stroke-width="0.8" stroke-opacity="0.8"/>
<circle cx="850.3" cy="283.6" r="2.5" fill="none" stroke="#000" stroke-width="0.8" stroke-opacity="0.8"/>
<circle cx="846.8" cy="289.6" r="2.7" fill="none" stroke="#000" stroke-width="0.8" stroke-opacity="0.8"/>
<circle cx="849.0" cy="289.0" r="2.1" fill="none" stroke="#000" stroke-width="0.8" stroke-opacity="0.8"/>
<circle cx="845.1" cy="273.2" r="1.9" fill="none" stroke="#000" stroke-width="0.8" stroke-opacity="0.8"/>
<circle cx="847.8" cy="300.2" r="2.7" fill="none" stroke="#000" stroke-width="0.8" stroke-opacity="0.8"/>
<circle cx="852.4" cy="269.0" r="2.8" fill="none" stroke="#000" stroke-width="0.8" stroke-opacity="0.8"/>
<circle cx="847.2" cy="301.2" r="3.3" fill="none" stroke="#000" stroke-width="0.8" stroke-opacity="0.8"/>
<circle cx="860.1" cy="287.2" r="2.8" fill="none" stroke="#000" stroke-width="0.8" stroke-opacity="0.8"/>
<circle cx="847.6" cy="292.6" r="2.1" fill="none" stroke="#000" stroke-width="0.8" stroke-opacity="0.8"/>
<circle cx="847.8" cy="282.0" r="1.7" fill="none" stroke="#000" stroke-width="0.8" stroke-opacity="0.8"/>
<circle cx="850.4" cy="284.1" r="1.8" fill="none" stroke="#000" stroke-width="0.8" stroke-opacity="0.8"/>
<circle cx="846.2" cy="284.5" r="2.7" fill="none" stroke="#000" stroke-width="0.8" stroke-opacity="0.8"/>
<circle cx="844.6" cy="287.9" r="3.4" fill="none" stroke="#000" stroke-width="0.8" stroke-opacity="0.8"/>
<circle cx="846.4" cy="285.4" r="3.3" fill="none" stroke="#000" stroke-width="0.8" stroke-opacity="0.8"/>
<circle cx="841.3" cy="279.7" r="3.0" fill="none" stroke="#000" stroke-width="0.8" stroke-opacity="0.8"/>
<circle cx="849.1" cy="290.8" r="1.8" fill="none" stroke="#000" stroke-width="0.8" stroke-opacity="0.8"/>
<circle cx="851.5" cy="275.7" r="2.6" fill="none" stroke="#000" stroke-width="0.8" stroke-opacity="0.8"/>
<circle cx="840.1" cy="275.2" r="2.5" fill="none" stroke="#000" stroke-width="0.8" stroke-opacity="0.8"/>
<circle cx="843.2" cy="288.5" r="3.5" fill="none" stroke="#000" stroke-width="0.8" stroke-opacity="0.8"/>
<circle cx="849.3" cy="289.3" r="3.2" fill="none" stroke="#000" stroke-width="0.8" stroke-opacity="0.8"/>
<circle cx="850.3" cy="287.6" r="2.6" fill="none" stroke="#000" stroke-width="0.8" stroke-opacity="0.8"/>
<circle cx="847.4" cy="291.9" r="1.6" fill="none" stroke="#000" stroke-width="0.8" stroke-opacity="0.8"/>
<circle cx="846.0" cy="285.3" r="2.1" fill="none" stroke="#000" stroke-width="0.8" stroke-opacity="0.8"/>
<circle cx="853.2" cy="291.6" r="1.9" fill="none" stroke="#000" stroke-width="0.8" stroke-opacity="0.8"/>
<circle cx="845.8" cy="286.6" r="2.6" fill="none" stroke="#000" stroke-width="0.8" stroke-opacity="0.8"/>
<path fill-opacity="0.38" d="M839.8 298.0h0.7v0.7h-0.7zM846.1 290.5h0.9v0.9h-0.9zM851.9 287.3h0.8v0.8h-0.8zM843.1 285.7h0.8v0.8h-0.8zM848.4 286.9h0.7v0.7h-0.7zM850.6 278.8h0.8v0.8h-0.8zM858.1 280.5h0.7v0.7h-0.7zM855.4 286.8h0.8v0.8h-0.8zM850.2 294.6h1.0v1.0h-1.0zM859.3 276.5h1.0v1.0h-1.0zM850.4 289.3h1.0v1.0h-1.0zM854.0 280.6h0.6v0.6h-0.6zM840.6 283.3h1.1v1.1h-1.1zM845.4 285.4h1.1v1.1h-1.1zM838.9 287.3h0.9v0.9h-0.9zM850.3 274.3h0.7v0.7h-0.7zM842.7 293.1h0.8v0.8h-0.8zM852.1 289.8h1.1v1.1h-1.1zM855.0 288.7h0.7v0.7h-0.7zM846.2 283.0h0.8v0.8h-0.8zM844.8 291.6h0.7v0.7h-0.7zM844.9 288.4h1.2v1.2h-1.2zM845.5 288.6h1.1v1.1h-1.1zM847.1 282.5h1.1v1.1h-1.1zM842.1 287.5h0.9v0.9h-0.9zM842.6 285.8h0.6v0.6h-0.6zM846.2 280.4h1.0v1.0h-1.0zM855.1 284.3h1.1v1.1h-1.1zM850.8 291.8h1.1v1.1h-1.1zM843.3 278.2h1.0v1.0h-1.0zM843.6 292.5h1.0v1.0h-1.0zM845.4 285.7h1.1v1.1h-1.1zM848.0 283.0h0.9v0.9h-0.9zM849.7 284.4h1.1v1.1h-1.1zM849.5 287.3h1.1v1.1h-1.1zM845.5 289.8h0.6v0.6h-0.6zM840.2 288.7h0.9v0.9h-0.9zM853.4 282.1h1.0v1.0h-1.0zM848.0 295.5h0.8v0.8h-0.8zM847.3 291.4h0.6v0.6h-0.6zM836.8 287.9h0.7v0.7h-0.7zM852.0 289.7h1.2v1.2h-1.2zM839.5 286.2h0.9v0.9h-0.9zM855.5 285.3h0.9v0.9h-0.9zM845.8 285.6h0.9v0.9h-0.9zM850.3 290.1h1.0v1.0h-1.0zM842.9 291.0h0.6v0.6h-0.6z"/>
<path fill-opacity="0.62" d="M848.4 285.4h0.9v0.9h-0.9zM845.5 281.0h1.0v1.0h-1.0zM843.6 273.5h0.9v0.9h-0.9zM844.8 286.2h1.1v1.1h-1.1zM847.8 280.5h0.9v0.9h-0.9zM852.3 283.0h1.0v1.0h-1.0zM842.4 278.2h1.0v1.0h-1.0zM845.8 286.1h1.1v1.1h-1.1zM851.7 276.5h0.7v0.7h-0.7zM848.8 283.4h1.1v1.1h-1.1zM848.3 283.5h0.8v0.8h-0.8zM849.9 281.7h0.8v0.8h-0.8zM846.7 278.8h0.9v0.9h-0.9zM846.1 287.6h0.9v0.9h-0.9zM848.7 288.1h0.6v0.6h-0.6zM838.6 287.4h0.8v0.8h-0.8zM836.7 287.9h1.2v1.2h-1.2zM848.0 282.1h1.0v1.0h-1.0zM847.9 284.2h0.9v0.9h-0.9zM858.2 275.0h0.8v0.8h-0.8zM842.6 290.9h1.0v1.0h-1.0zM851.6 283.7h0.9v0.9h-0.9zM857.1 288.9h0.7v0.7h-0.7zM845.3 285.2h0.9v0.9h-0.9zM846.5 301.3h1.0v1.0h-1.0zM850.9 276.3h1.1v1.1h-1.1zM848.1 286.3h0.7v0.7h-0.7zM840.0 279.0h1.1v1.1h-1.1zM854.3 304.1h0.6v0.6h-0.6zM852.4 286.0h1.2v1.2h-1.2zM848.6 280.7h0.9v0.9h-0.9zM846.9 290.9h0.8v0.8h-0.8zM838.7 282.5h0.9v0.9h-0.9zM845.5 297.4h0.8v0.8h-0.8zM849.8 293.9h1.0v1.0h-1.0zM842.3 285.7h0.6v0.6h-0.6zM853.6 285.9h1.1v1.1h-1.1zM854.4 288.8h1.2v1.2h-1.2zM851.6 280.5h0.9v0.9h-0.9zM855.3 278.5h1.1v1.1h-1.1zM850.0 294.2h0.6v0.6h-0.6zM842.4 278.9h0.6v0.6h-0.6zM851.1 282.0h0.6v0.6h-0.6zM859.5 287.2h0.9v0.9h-0.9zM843.1 306.3h0.8v0.8h-0.8zM857.0 293.0h0.7v0.7h-0.7zM852.5 285.4h0.8v0.8h-0.8zM848.3 297.0h1.2v1.2h-1.2zM857.1 289.6h1.1v1.1h-1.1zM844.5 285.6h1.0v1.0h-1.0zM838.4 277.6h1.2v1.2h-1.2zM846.5 293.3h0.9v0.9h-0.9zM844.9 292.3h0.7v0.7h-0.7zM839.6 283.9h1.0v1.0h-1.0zM843.7 289.7h0.7v0.7h-0.7zM850.5 281.9h0.7v0.7h-0.7zM853.5 284.3h0.9v0.9h-0.9z"/>
<path fill-opacity="0.88" d="M856.6 289.4h0.9v0.9h-0.9zM841.1 290.4h1.1v1.1h-1.1zM849.9 292.1h1.2v1.2h-1.2zM850.9 282.2h1.2v1.2h-1.2zM853.6 292.7h1.2v1.2h-1.2zM847.7 278.4h1.2v1.2h-1.2zM854.2 286.4h1.2v1.2h-1.2zM841.9 285.7h0.6v0.6h-0.6zM846.2 288.1h0.7v0.7h-0.7zM852.1 289.7h1.1v1.1h-1.1zM839.3 288.6h0.6v0.6h-0.6zM843.2 299.4h1.0v1.0h-1.0zM842.0 297.7h0.7v0.7h-0.7zM848.7 294.0h1.2v1.2h-1.2zM856.2 278.3h0.9v0.9h-0.9zM847.8 286.9h1.0v1.0h-1.0z"/>
<clipPath id="bc"><circle cx="881" cy="288" r="15"/></clipPath><g clip-path="url(#bc)"><circle cx="881" cy="288" r="15" fill="#000"/>
<circle cx="872.1" cy="279.3" r="2.7" fill="#fff"/>
<circle cx="892.7" cy="283.6" r="2.9" fill="#fff"/>
<circle cx="890.7" cy="289.8" r="2.9" fill="#fff"/>
<circle cx="873.9" cy="289.4" r="2.4" fill="#fff"/>
<circle cx="879.5" cy="287.3" r="1.9" fill="#fff"/>
<circle cx="878.4" cy="301.6" r="2.7" fill="#fff"/>
<circle cx="888.0" cy="298.9" r="1.8" fill="#fff"/>
<circle cx="885.6" cy="283.2" r="1.9" fill="#fff"/>
<circle cx="877.2" cy="292.5" r="1.8" fill="#fff"/>
<circle cx="894.4" cy="293.0" r="1.6" fill="#fff"/>
<circle cx="881.0" cy="274.7" r="1.6" fill="#fff"/>
<circle cx="884.1" cy="288.2" r="1.9" fill="#fff"/>
<circle cx="875.6" cy="274.6" r="1.8" fill="#fff"/>
<circle cx="867.7" cy="288.5" r="1.8" fill="#fff"/>
<circle cx="872.7" cy="297.8" r="2.7" fill="#fff"/>
<circle cx="885.7" cy="277.3" r="2.7" fill="#fff"/>
<circle cx="880.3" cy="282.0" r="2.7" fill="#fff"/>
<circle cx="870.1" cy="292.2" r="1.9" fill="#fff"/>
<circle cx="886.5" cy="294.1" r="1.9" fill="#fff"/>
<circle cx="881.9" cy="296.8" r="2.6" fill="#fff"/>
<circle cx="874.6" cy="284.7" r="1.7" fill="#fff"/>
<circle cx="868.1" cy="283.3" r="2.5" fill="#fff"/>
<circle cx="881.1" cy="291.7" r="1.8" fill="#fff"/>
<circle cx="884.8" cy="301.4" r="1.8" fill="#fff"/>
<circle cx="892.2" cy="296.4" r="1.6" fill="#fff"/>
<circle cx="891.7" cy="278.9" r="1.6" fill="#fff"/>
<circle cx="877.2" cy="278.1" r="1.7" fill="#fff"/>
<circle cx="895.2" cy="288.0" r="1.6" fill="#fff"/>
</g>
<path fill-opacity="0.38" d="M908.0 282.8h0.8v0.8h-0.8zM920.8 285.7h1.1v1.1h-1.1zM914.6 290.8h1.3v1.3h-1.3zM905.1 292.2h1.3v1.3h-1.3zM910.6 294.1h1.1v1.1h-1.1zM906.8 283.4h1.5v1.5h-1.5zM926.0 290.9h1.2v1.2h-1.2zM910.5 289.2h0.8v0.8h-0.8zM904.1 288.5h1.3v1.3h-1.3zM904.9 292.9h1.4v1.4h-1.4zM912.2 292.8h1.0v1.0h-1.0zM904.7 284.5h1.2v1.2h-1.2zM911.2 300.4h1.0v1.0h-1.0zM903.8 290.8h1.5v1.5h-1.5zM914.7 302.0h1.1v1.1h-1.1zM910.3 280.2h1.1v1.1h-1.1zM923.6 295.0h1.4v1.4h-1.4zM908.8 293.1h0.9v0.9h-0.9zM909.7 278.9h1.4v1.4h-1.4zM914.7 299.0h0.9v0.9h-0.9zM911.6 275.7h1.5v1.5h-1.5zM927.9 286.6h1.2v1.2h-1.2zM906.3 296.1h1.0v1.0h-1.0zM923.7 284.1h0.9v0.9h-0.9zM907.5 298.8h0.9v0.9h-0.9zM914.0 289.9h1.0v1.0h-1.0zM921.4 295.8h1.0v1.0h-1.0zM924.6 290.2h1.4v1.4h-1.4zM924.5 282.6h1.2v1.2h-1.2zM926.7 289.7h1.1v1.1h-1.1zM908.5 285.4h1.2v1.2h-1.2zM917.7 290.7h1.5v1.5h-1.5zM912.7 301.1h1.3v1.3h-1.3zM915.4 295.2h1.5v1.5h-1.5zM910.7 288.5h1.4v1.4h-1.4zM922.2 279.0h1.5v1.5h-1.5zM924.9 286.4h1.0v1.0h-1.0zM903.1 283.7h1.2v1.2h-1.2zM910.1 285.3h1.0v1.0h-1.0zM918.2 277.9h1.5v1.5h-1.5zM908.5 291.9h1.5v1.5h-1.5zM910.0 276.4h0.9v0.9h-0.9zM923.3 288.4h1.5v1.5h-1.5zM910.4 283.7h1.6v1.6h-1.6zM909.0 292.8h1.1v1.1h-1.1zM923.9 290.6h1.2v1.2h-1.2zM921.3 299.7h0.8v0.8h-0.8zM905.1 282.5h1.2v1.2h-1.2zM928.2 292.2h1.3v1.3h-1.3z"/>
<path fill-opacity="0.62" d="M904.1 293.6h0.8v0.8h-0.8zM928.7 288.5h0.8v0.8h-0.8zM918.9 300.1h1.1v1.1h-1.1zM926.1 292.4h1.6v1.6h-1.6zM922.4 287.0h1.2v1.2h-1.2zM919.7 291.9h0.9v0.9h-0.9zM906.6 283.3h1.6v1.6h-1.6zM924.5 279.0h1.2v1.2h-1.2zM908.5 285.6h1.3v1.3h-1.3zM928.1 286.8h1.4v1.4h-1.4zM916.5 301.7h1.5v1.5h-1.5zM924.7 286.0h1.3v1.3h-1.3zM927.0 283.3h1.0v1.0h-1.0zM906.6 278.8h1.3v1.3h-1.3zM903.0 290.6h1.0v1.0h-1.0zM921.4 290.8h1.3v1.3h-1.3zM906.0 282.8h0.8v0.8h-0.8zM923.7 280.8h1.4v1.4h-1.4zM917.9 276.8h1.1v1.1h-1.1zM912.0 283.7h0.9v0.9h-0.9zM914.9 298.9h1.5v1.5h-1.5zM917.9 301.2h1.3v1.3h-1.3zM922.8 280.2h1.2v1.2h-1.2zM908.3 288.9h1.1v1.1h-1.1zM923.8 285.9h1.6v1.6h-1.6zM917.1 295.9h1.5v1.5h-1.5zM923.8 297.1h0.9v0.9h-0.9zM918.0 295.5h0.8v0.8h-0.8zM927.3 287.1h0.8v0.8h-0.8zM907.1 288.4h1.6v1.6h-1.6zM914.4 295.7h1.1v1.1h-1.1zM921.8 300.1h1.2v1.2h-1.2zM920.2 300.2h1.1v1.1h-1.1zM916.4 289.0h1.5v1.5h-1.5zM910.3 297.4h1.4v1.4h-1.4zM916.5 277.4h1.4v1.4h-1.4zM915.8 284.2h1.1v1.1h-1.1zM913.5 287.8h1.0v1.0h-1.0zM921.3 282.3h1.0v1.0h-1.0zM914.5 282.8h1.6v1.6h-1.6zM909.4 285.7h1.3v1.3h-1.3zM902.3 290.1h1.3v1.3h-1.3zM907.5 296.0h1.4v1.4h-1.4zM914.5 284.2h1.1v1.1h-1.1zM915.6 279.4h1.3v1.3h-1.3zM916.5 278.2h1.6v1.6h-1.6zM921.3 282.3h1.3v1.3h-1.3zM907.0 283.1h1.4v1.4h-1.4zM916.3 293.2h0.8v0.8h-0.8zM908.8 290.9h1.4v1.4h-1.4zM909.6 284.7h1.0v1.0h-1.0zM909.9 275.4h0.9v0.9h-0.9zM912.3 279.0h1.5v1.5h-1.5zM903.8 288.2h0.8v0.8h-0.8zM913.0 276.7h1.1v1.1h-1.1zM919.1 288.7h1.0v1.0h-1.0zM908.3 299.1h1.5v1.5h-1.5zM920.0 290.1h1.0v1.0h-1.0zM919.6 295.4h0.8v0.8h-0.8zM916.0 281.8h1.1v1.1h-1.1zM928.6 286.7h1.0v1.0h-1.0zM912.9 295.7h1.1v1.1h-1.1zM913.6 280.7h1.3v1.3h-1.3zM924.5 291.1h1.2v1.2h-1.2zM912.5 279.7h1.0v1.0h-1.0zM922.9 286.8h1.4v1.4h-1.4zM916.7 286.1h1.1v1.1h-1.1zM904.7 284.0h1.4v1.4h-1.4zM906.3 289.6h1.0v1.0h-1.0zM911.6 298.8h0.8v0.8h-0.8zM923.4 278.4h1.2v1.2h-1.2zM902.2 285.6h1.3v1.3h-1.3zM912.1 292.9h1.4v1.4h-1.4zM924.2 290.3h1.1v1.1h-1.1zM916.1 289.5h1.5v1.5h-1.5zM916.6 292.7h1.3v1.3h-1.3zM918.7 289.4h0.8v0.8h-0.8zM907.0 298.0h1.5v1.5h-1.5zM925.5 293.3h1.2v1.2h-1.2zM917.4 281.7h1.3v1.3h-1.3zM910.5 275.5h1.2v1.2h-1.2zM920.0 277.0h0.9v0.9h-0.9zM912.3 288.6h1.5v1.5h-1.5zM914.6 275.7h1.0v1.0h-1.0zM914.3 297.7h1.4v1.4h-1.4zM919.6 292.9h1.5v1.5h-1.5zM909.3 287.7h1.4v1.4h-1.4zM901.5 288.4h1.3v1.3h-1.3zM925.2 289.4h1.3v1.3h-1.3zM911.5 286.3h1.1v1.1h-1.1zM916.0 292.1h1.5v1.5h-1.5zM906.8 279.9h1.2v1.2h-1.2zM912.5 286.8h0.9v0.9h-0.9zM921.5 282.1h1.4v1.4h-1.4zM911.3 288.6h1.4v1.4h-1.4zM913.4 291.7h1.2v1.2h-1.2zM915.4 292.1h0.9v0.9h-0.9zM914.7 277.3h1.2v1.2h-1.2zM916.9 291.3h0.9v0.9h-0.9zM921.8 292.5h0.9v0.9h-0.9zM916.1 296.7h1.4v1.4h-1.4zM910.3 294.0h1.5v1.5h-1.5zM920.6 276.6h1.0v1.0h-1.0zM923.7 278.2h0.9v0.9h-0.9zM924.0 279.7h1.0v1.0h-1.0zM921.1 298.0h1.2v1.2h-1.2zM907.7 299.0h1.5v1.5h-1.5zM913.2 282.9h1.2v1.2h-1.2zM910.0 281.0h1.2v1.2h-1.2zM918.1 282.9h1.6v1.6h-1.6zM918.5 287.8h1.5v1.5h-1.5zM923.1 285.8h1.2v1.2h-1.2zM907.3 287.3h1.0v1.0h-1.0zM912.3 297.3h0.9v0.9h-0.9zM909.9 292.2h1.0v1.0h-1.0zM917.6 298.3h1.4v1.4h-1.4zM924.7 285.6h1.4v1.4h-1.4zM912.7 284.7h1.1v1.1h-1.1zM910.5 282.5h1.2v1.2h-1.2zM903.7 289.9h1.6v1.6h-1.6zM913.5 295.5h1.4v1.4h-1.4zM902.7 289.1h1.5v1.5h-1.5zM913.9 283.0h0.9v0.9h-0.9zM910.7 290.7h1.1v1.1h-1.1zM913.2 279.3h1.5v1.5h-1.5zM920.5 286.5h1.5v1.5h-1.5zM907.5 289.5h1.6v1.6h-1.6zM908.9 300.0h1.2v1.2h-1.2zM922.6 287.0h1.5v1.5h-1.5zM902.6 291.2h1.0v1.0h-1.0zM926.2 293.7h0.9v0.9h-0.9zM923.6 287.2h0.8v0.8h-0.8zM920.1 300.3h1.0v1.0h-1.0zM922.0 287.9h1.3v1.3h-1.3zM924.1 277.6h1.3v1.3h-1.3zM921.4 299.6h1.1v1.1h-1.1zM914.9 298.9h0.9v0.9h-0.9zM923.8 290.8h1.3v1.3h-1.3zM925.7 281.3h0.9v0.9h-0.9zM927.1 281.6h1.1v1.1h-1.1zM910.9 275.2h1.0v1.0h-1.0zM926.1 291.1h1.5v1.5h-1.5zM925.7 295.2h1.5v1.5h-1.5zM923.5 299.1h0.9v0.9h-0.9zM904.0 292.6h1.2v1.2h-1.2zM918.8 290.3h1.5v1.5h-1.5zM909.9 295.6h1.4v1.4h-1.4zM912.6 299.2h1.2v1.2h-1.2zM916.9 285.5h1.2v1.2h-1.2zM919.1 283.3h1.0v1.0h-1.0zM906.2 277.8h1.1v1.1h-1.1zM926.5 289.8h1.2v1.2h-1.2z"/>
<path fill-opacity="0.88" d="M924.7 290.3h1.1v1.1h-1.1zM906.8 294.0h1.3v1.3h-1.3zM906.8 278.7h1.3v1.3h-1.3zM904.7 282.0h1.5v1.5h-1.5zM920.9 290.5h1.1v1.1h-1.1zM914.7 301.8h1.1v1.1h-1.1zM919.5 296.2h1.4v1.4h-1.4zM911.3 300.9h1.1v1.1h-1.1zM911.2 295.8h1.1v1.1h-1.1zM905.3 288.9h1.6v1.6h-1.6zM915.9 285.7h0.9v0.9h-0.9zM919.3 280.1h1.4v1.4h-1.4zM922.7 299.1h1.4v1.4h-1.4zM912.6 279.7h0.9v0.9h-0.9zM920.1 287.3h1.4v1.4h-1.4zM924.5 288.7h1.0v1.0h-1.0zM925.7 281.7h1.2v1.2h-1.2zM910.2 283.8h1.5v1.5h-1.5zM921.5 296.5h1.3v1.3h-1.3zM923.5 290.3h1.3v1.3h-1.3zM915.3 298.4h1.1v1.1h-1.1zM922.1 287.1h1.0v1.0h-1.0zM926.2 285.0h1.1v1.1h-1.1zM923.0 296.2h1.5v1.5h-1.5zM921.2 283.1h1.1v1.1h-1.1zM912.1 288.9h1.1v1.1h-1.1zM921.2 290.5h1.0v1.0h-1.0zM924.0 290.3h0.9v0.9h-0.9zM910.9 288.8h1.3v1.3h-1.3zM914.4 279.8h1.1v1.1h-1.1zM906.2 290.0h1.4v1.4h-1.4zM922.5 296.1h1.4v1.4h-1.4zM924.6 280.0h1.0v1.0h-1.0zM917.7 291.7h1.2v1.2h-1.2zM916.5 296.8h1.1v1.1h-1.1zM918.2 300.4h0.9v0.9h-0.9zM914.2 288.8h1.2v1.2h-1.2zM911.0 279.0h1.4v1.4h-1.4zM910.9 295.4h1.2v1.2h-1.2zM911.7 297.5h1.5v1.5h-1.5zM923.2 284.7h0.8v0.8h-0.8zM911.7 295.2h0.9v0.9h-0.9zM909.5 281.0h1.1v1.1h-1.1zM915.7 275.7h1.4v1.4h-1.4zM911.6 277.7h1.4v1.4h-1.4zM923.5 277.2h0.9v0.9h-0.9zM913.5 293.3h0.9v0.9h-0.9zM922.3 295.0h1.5v1.5h-1.5zM920.8 290.2h1.3v1.3h-1.3zM921.7 290.1h1.1v1.1h-1.1zM918.0 282.0h1.4v1.4h-1.4zM926.1 290.5h1.0v1.0h-1.0zM909.0 293.8h0.9v0.9h-0.9zM923.8 288.5h1.1v1.1h-1.1zM927.0 282.6h1.0v1.0h-1.0zM913.4 284.6h0.9v0.9h-0.9zM914.3 298.3h0.8v0.8h-0.8zM913.5 276.8h1.4v1.4h-1.4zM908.1 293.0h1.3v1.3h-1.3zM914.4 301.7h1.1v1.1h-1.1zM919.3 281.0h1.1v1.1h-1.1zM917.0 286.5h0.9v0.9h-0.9zM920.3 297.5h1.5v1.5h-1.5zM901.6 289.7h0.8v0.8h-0.8zM906.3 298.3h1.4v1.4h-1.4zM926.1 282.2h1.0v1.0h-1.0zM910.1 299.4h1.5v1.5h-1.5zM924.1 287.6h1.4v1.4h-1.4zM918.1 281.8h1.2v1.2h-1.2zM907.8 295.2h1.3v1.3h-1.3zM913.6 283.3h0.9v0.9h-0.9zM917.1 274.6h0.8v0.8h-0.8zM923.3 294.5h0.8v0.8h-0.8zM907.8 298.9h1.4v1.4h-1.4zM915.3 283.5h1.5v1.5h-1.5zM917.9 288.4h0.8v0.8h-0.8zM924.2 296.9h1.6v1.6h-1.6zM910.5 274.9h1.5v1.5h-1.5zM922.8 286.0h1.4v1.4h-1.4zM907.1 294.8h1.0v1.0h-1.0zM911.3 275.0h1.5v1.5h-1.5zM904.7 291.0h0.8v0.8h-0.8zM914.0 279.6h1.2v1.2h-1.2zM921.5 298.0h1.5v1.5h-1.5zM901.5 286.3h1.4v1.4h-1.4zM914.6 282.3h1.1v1.1h-1.1zM921.4 285.2h1.2v1.2h-1.2zM910.9 284.0h1.1v1.1h-1.1zM918.3 294.6h0.8v0.8h-0.8zM918.7 286.9h1.4v1.4h-1.4zM922.0 297.9h0.8v0.8h-0.8zM916.0 286.0h1.2v1.2h-1.2zM914.1 290.9h1.0v1.0h-1.0zM916.8 279.9h1.3v1.3h-1.3zM905.5 283.7h1.6v1.6h-1.6zM909.8 276.0h1.2v1.2h-1.2zM917.9 300.6h1.2v1.2h-1.2zM901.9 287.8h1.2v1.2h-1.2zM912.6 280.7h1.6v1.6h-1.6zM907.2 288.8h0.8v0.8h-0.8zM918.6 299.1h0.9v0.9h-0.9zM924.4 292.6h0.9v0.9h-0.9zM926.7 282.1h1.3v1.3h-1.3zM911.4 296.9h1.3v1.3h-1.3zM909.0 282.3h1.3v1.3h-1.3zM915.8 274.5h1.3v1.3h-1.3zM925.3 279.6h0.9v0.9h-0.9zM918.4 274.6h1.3v1.3h-1.3zM922.9 278.7h1.0v1.0h-1.0zM918.6 275.6h1.3v1.3h-1.3zM910.6 278.7h1.4v1.4h-1.4zM914.0 275.0h1.0v1.0h-1.0zM921.5 298.2h1.1v1.1h-1.1zM915.4 285.9h1.0v1.0h-1.0zM923.3 288.3h1.4v1.4h-1.4zM902.5 288.0h1.1v1.1h-1.1zM922.5 291.0h1.0v1.0h-1.0zM914.6 274.5h1.1v1.1h-1.1zM919.9 298.0h1.6v1.6h-1.6zM912.8 295.2h0.9v0.9h-0.9zM914.0 285.5h1.0v1.0h-1.0zM922.4 296.5h1.6v1.6h-1.6zM927.2 292.2h1.6v1.6h-1.6zM905.8 278.1h1.5v1.5h-1.5zM907.1 283.5h1.3v1.3h-1.3zM903.2 289.0h1.0v1.0h-1.0zM902.4 288.7h1.4v1.4h-1.4zM910.6 289.9h0.8v0.8h-0.8zM909.2 281.9h1.0v1.0h-1.0z"/>
<circle cx="949" cy="288" r="15"/>
<rect x="944.1" y="281.9" width="1.2" height="1.7" fill="#fff"/>
<rect x="947.9" y="286.3" width="1.8" height="1.1" fill="#fff"/>
<rect x="958.4" y="278.8" width="1.1" height="1.4" fill="#fff"/>
<rect x="946.4" y="283.3" width="1.9" height="1.3" fill="#fff"/>
<rect x="935.2" y="288.3" width="1.3" height="1.9" fill="#fff"/>
<rect x="952.5" y="293.0" width="1.7" height="1.6" fill="#fff"/>
<rect x="942.9" y="291.2" width="1.9" height="1.3" fill="#fff"/>
<rect x="948.5" y="292.9" width="1.4" height="1.9" fill="#fff"/>
<rect x="939.2" y="291.8" width="1.8" height="1.4" fill="#fff"/>
<rect x="943.5" y="277.9" width="1.5" height="1.4" fill="#fff"/>
<rect x="942.6" y="294.9" width="1.7" height="1.7" fill="#fff"/>
<rect x="947.1" y="297.3" width="1.8" height="1.1" fill="#fff"/>
<rect x="962.7" y="290.7" width="1.1" height="1.3" fill="#fff"/>
<rect x="962.6" y="288.1" width="1.6" height="1.3" fill="#fff"/>
<rect x="950.0" y="279.6" width="1.6" height="1.4" fill="#fff"/>
<rect x="960.5" y="290.3" width="1.9" height="1.3" fill="#fff"/>
<rect x="950.2" y="277.1" width="1.3" height="1.3" fill="#fff"/>
<rect x="958.2" y="285.8" width="1.2" height="1.8" fill="#fff"/>
<rect x="939.3" y="288.4" width="1.8" height="1.3" fill="#fff"/>
<rect x="959.5" y="282.4" width="2.0" height="2.0" fill="#fff"/>
<rect x="951.5" y="281.9" width="1.5" height="1.4" fill="#fff"/>
<rect x="953.9" y="290.1" width="1.8" height="1.6" fill="#fff"/>
<rect x="947.6" y="290.5" width="1.4" height="1.4" fill="#fff"/>
<rect x="947.9" y="288.8" width="1.5" height="1.7" fill="#fff"/>
<rect x="942.1" y="284.3" width="1.6" height="1.8" fill="#fff"/>
<rect x="957.1" y="284.9" width="1.7" height="1.2" fill="#fff"/>
<rect x="946.2" y="286.7" width="1.4" height="1.4" fill="#fff"/>
<rect x="954.6" y="297.6" width="1.5" height="1.7" fill="#fff"/>
<rect x="941.2" y="298.6" width="1.2" height="1.7" fill="#fff"/>
<rect x="957.8" y="286.4" width="1.3" height="1.5" fill="#fff"/>
<rect x="953.9" y="278.2" width="1.3" height="1.8" fill="#fff"/>
<rect x="950.0" y="281.3" width="1.3" height="1.0" fill="#fff"/>
<rect x="937.5" y="286.2" width="1.1" height="1.4" fill="#fff"/>
<rect x="942.1" y="293.7" width="1.8" height="1.4" fill="#fff"/>
<rect x="941.4" y="283.4" width="1.9" height="1.2" fill="#fff"/>
<rect x="950.6" y="288.2" width="1.7" height="1.5" fill="#fff"/>
<rect x="952.1" y="276.6" width="1.1" height="1.9" fill="#fff"/>
<rect x="936.0" y="283.1" width="1.1" height="1.9" fill="#fff"/>
<rect x="956.2" y="297.6" width="1.9" height="2.0" fill="#fff"/>
<rect x="952.7" y="286.1" width="1.0" height="1.6" fill="#fff"/>
<rect x="949.1" y="285.6" width="1.2" height="1.7" fill="#fff"/>
<rect x="955.5" y="290.1" width="1.7" height="1.4" fill="#fff"/>
<rect x="937.8" y="291.5" width="1.4" height="1.1" fill="#fff"/>
<rect x="942.6" y="299.3" width="1.3" height="1.7" fill="#fff"/>
<rect x="939.6" y="287.7" width="1.4" height="1.5" fill="#fff"/>
<rect x="962.2" y="283.7" width="1.4" height="1.4" fill="#fff"/>
<rect x="948.4" y="278.7" width="1.1" height="1.6" fill="#fff"/>
<rect x="954.2" y="291.2" width="1.4" height="1.7" fill="#fff"/>
<rect x="944.4" y="281.3" width="1.3" height="1.1" fill="#fff"/>
<rect x="938.9" y="282.2" width="1.0" height="1.6" fill="#fff"/>
<rect x="956.1" y="276.7" width="1.2" height="1.8" fill="#fff"/>
<rect x="945.4" y="294.3" width="1.7" height="1.2" fill="#fff"/>
<rect x="943.7" y="293.0" width="1.2" height="1.3" fill="#fff"/>
<rect x="949.9" y="300.0" width="1.3" height="1.8" fill="#fff"/>
<rect x="959.2" y="290.7" width="1.6" height="1.2" fill="#fff"/>
<rect x="950.7" y="298.7" width="1.3" height="1.7" fill="#fff"/>
<rect x="951.9" y="296.5" width="1.2" height="1.0" fill="#fff"/>
<rect x="940.7" y="294.8" width="1.5" height="2.0" fill="#fff"/>
<rect x="944.2" y="283.4" width="1.1" height="1.5" fill="#fff"/>
<rect x="944.4" y="278.4" width="1.2" height="1.0" fill="#fff"/>
<rect x="958.0" y="291.7" width="1.4" height="1.1" fill="#fff"/>
<rect x="936.6" y="292.3" width="1.7" height="1.3" fill="#fff"/>
<rect x="947.8" y="296.0" width="1.8" height="1.2" fill="#fff"/>
<rect x="946.0" y="288.4" width="1.6" height="1.7" fill="#fff"/>
<rect x="958.4" y="293.1" width="1.0" height="1.1" fill="#fff"/>
<rect x="942.7" y="295.5" width="1.7" height="1.1" fill="#fff"/>
<rect x="945.3" y="276.1" width="1.6" height="1.9" fill="#fff"/>
<rect x="945.5" y="295.4" width="1.4" height="1.1" fill="#fff"/>
<rect x="956.2" y="288.0" width="1.1" height="1.8" fill="#fff"/>
<rect x="941.5" y="297.9" width="1.1" height="1.2" fill="#fff"/>
<rect x="944.5" y="283.4" width="1.2" height="1.6" fill="#fff"/>
<rect x="942.2" y="278.5" width="1.1" height="1.2" fill="#fff"/>
<rect x="947.6" y="274.3" width="1.0" height="1.3" fill="#fff"/>
<rect x="961.3" y="283.4" width="1.5" height="1.6" fill="#fff"/>
<rect x="948.1" y="297.9" width="1.3" height="1.3" fill="#fff"/>
<rect x="941.7" y="278.4" width="1.7" height="1.4" fill="#fff"/>
<rect x="945.7" y="295.9" width="1.8" height="1.4" fill="#fff"/>
<rect x="944.4" y="298.0" width="1.9" height="1.7" fill="#fff"/>
<rect x="943.1" y="278.5" width="1.4" height="1.5" fill="#fff"/>
<rect x="957.8" y="280.0" width="1.1" height="1.0" fill="#fff"/>
<rect x="951.4" y="299.8" width="1.5" height="1.2" fill="#fff"/>
<rect x="961.0" y="287.3" width="1.5" height="2.0" fill="#fff"/>
<rect x="951.6" y="280.4" width="1.8" height="1.5" fill="#fff"/>
<rect x="938.6" y="286.9" width="2.0" height="1.9" fill="#fff"/>
<rect x="938.5" y="291.7" width="1.5" height="1.8" fill="#fff"/>
<rect x="954.1" y="296.9" width="1.6" height="1.6" fill="#fff"/>
<rect x="951.2" y="299.6" width="1.3" height="1.1" fill="#fff"/>
<rect x="945.4" y="288.0" width="1.2" height="1.0" fill="#fff"/>
<rect x="940.2" y="278.7" width="1.3" height="1.0" fill="#fff"/>
<rect x="952.4" y="286.3" width="1.1" height="1.7" fill="#fff"/>
<rect x="952.9" y="289.0" width="1.8" height="1.5" fill="#fff"/>
<rect x="956.0" y="277.1" width="1.3" height="1.6" fill="#fff"/>
<rect x="942.9" y="284.9" width="1.6" height="1.4" fill="#fff"/>
<rect x="957.8" y="286.4" width="1.3" height="1.1" fill="#fff"/>
<rect x="949.1" y="278.8" width="1.4" height="1.4" fill="#fff"/>
<rect x="944.0" y="279.0" width="1.6" height="1.9" fill="#fff"/>
<rect x="938.9" y="285.4" width="1.9" height="1.9" fill="#fff"/>
<rect x="958.3" y="282.5" width="1.5" height="1.6" fill="#fff"/>
<rect x="947.7" y="301.0" width="1.9" height="1.1" fill="#fff"/>
<rect x="945.3" y="282.5" width="1.3" height="1.5" fill="#fff"/>
<rect x="943.5" y="276.1" width="1.5" height="2.0" fill="#fff"/>
<rect x="937.5" y="286.4" width="1.9" height="1.3" fill="#fff"/>
<rect x="948.7" y="291.7" width="1.2" height="1.4" fill="#fff"/>
<rect x="946.7" y="283.8" width="1.3" height="1.8" fill="#fff"/>
<rect x="961.4" y="285.8" width="2.0" height="2.0" fill="#fff"/>
<rect x="948.2" y="284.8" width="1.1" height="1.7" fill="#fff"/>
<rect x="946.5" y="281.7" width="1.0" height="1.7" fill="#fff"/>
<rect x="937.0" y="281.5" width="1.8" height="1.4" fill="#fff"/>
<rect x="948.7" y="295.2" width="1.0" height="1.2" fill="#fff"/>
<rect x="946.2" y="291.5" width="1.7" height="2.0" fill="#fff"/>
<rect x="960.2" y="285.2" width="1.4" height="1.8" fill="#fff"/>
<rect x="959.6" y="279.6" width="1.5" height="1.2" fill="#fff"/>
<rect x="955.8" y="296.8" width="1.7" height="1.5" fill="#fff"/>
<rect x="942.1" y="280.9" width="1.2" height="1.8" fill="#fff"/>
<rect x="951.1" y="281.7" width="1.5" height="1.5" fill="#fff"/>
<rect x="948.3" y="290.8" width="1.6" height="1.8" fill="#fff"/>
<rect x="958.9" y="292.4" width="1.3" height="1.2" fill="#fff"/>
<rect x="951.1" y="276.5" width="1.1" height="1.6" fill="#fff"/>
<rect x="957.9" y="294.2" width="1.4" height="1.3" fill="#fff"/>
<rect x="940.3" y="297.4" width="1.9" height="1.9" fill="#fff"/>
<rect x="940.9" y="298.2" width="1.2" height="1.7" fill="#fff"/>
<rect x="942.9" y="296.1" width="1.8" height="1.2" fill="#fff"/>
<rect x="947.4" y="274.8" width="1.8" height="1.3" fill="#fff"/>
<rect x="957.8" y="277.3" width="1.3" height="1.3" fill="#fff"/>
<rect x="961.7" y="289.7" width="1.1" height="1.4" fill="#fff"/>
<rect x="947.5" y="287.3" width="1.0" height="1.1" fill="#fff"/>
<rect x="950.7" y="290.3" width="1.2" height="1.9" fill="#fff"/>
<rect x="947.7" y="295.1" width="1.9" height="1.9" fill="#fff"/>
<rect x="949.3" y="296.9" width="1.2" height="1.6" fill="#fff"/>
<rect x="940.2" y="289.3" width="1.4" height="1.7" fill="#fff"/>
<rect x="947.3" y="282.5" width="1.3" height="1.1" fill="#fff"/>
<rect x="958.1" y="285.4" width="1.6" height="1.6" fill="#fff"/>
<rect x="939.9" y="296.5" width="1.8" height="1.5" fill="#fff"/>
<rect x="942.3" y="282.4" width="1.9" height="1.4" fill="#fff"/>
<rect x="944.0" y="276.7" width="2.0" height="1.4" fill="#fff"/>
<rect x="946.5" y="288.2" width="1.4" height="1.7" fill="#fff"/>
<rect x="939.4" y="278.3" width="1.8" height="1.8" fill="#fff"/>
<rect x="949.4" y="283.4" width="1.4" height="1.6" fill="#fff"/>
<rect x="956.5" y="294.7" width="1.7" height="1.7" fill="#fff"/>
<rect x="948.6" y="288.0" width="1.7" height="1.4" fill="#fff"/>
<rect x="945.0" y="280.5" width="2.0" height="2.0" fill="#fff"/>
<rect x="952.1" y="294.3" width="1.6" height="1.3" fill="#fff"/>
<rect x="944.3" y="293.9" width="1.3" height="1.1" fill="#fff"/>
<rect x="944.3" y="291.9" width="1.4" height="1.7" fill="#fff"/>
<rect x="939.3" y="280.8" width="1.2" height="1.3" fill="#fff"/>
<rect x="956.0" y="285.2" width="1.0" height="1.8" fill="#fff"/>
<rect x="938.0" y="280.7" width="1.5" height="1.6" fill="#fff"/>
<rect x="941.6" y="279.7" width="1.9" height="1.7" fill="#fff"/>
<rect x="937.5" y="284.6" width="1.9" height="1.5" fill="#fff"/>
<rect x="951.1" y="286.6" width="1.6" height="1.4" fill="#fff"/>
<circle cx="983" cy="287" r="15" fill="url(#g4)"/>
<rect x="979.0" y="277.2" width="1.2" height="1.2" fill="#fff"/>
<rect x="987.2" y="290.1" width="1.2" height="1.2" fill="#fff"/>
<rect x="989.7" y="272.9" width="1.2" height="1.2" fill="#fff"/>
<rect x="988.8" y="282.7" width="1.2" height="1.2" fill="#fff"/>
<rect x="979.4" y="289.8" width="1.2" height="1.2" fill="#fff"/>
<rect x="990.6" y="282.3" width="1.2" height="1.2" fill="#fff"/>
<rect x="994.3" y="280.7" width="1.2" height="1.2" fill="#fff"/>
<rect x="984.2" y="282.4" width="1.2" height="1.2" fill="#fff"/>
<rect x="983.4" y="288.2" width="1.2" height="1.2" fill="#fff"/>
<rect x="978.9" y="286.3" width="1.2" height="1.2" fill="#fff"/>
<rect x="979.8" y="275.2" width="1.2" height="1.2" fill="#fff"/>
<rect x="983.5" y="287.0" width="1.2" height="1.2" fill="#fff"/>
<rect x="994.3" y="287.2" width="1.2" height="1.2" fill="#fff"/>
<rect x="983.2" y="279.4" width="1.2" height="1.2" fill="#fff"/>
<rect x="991.4" y="275.8" width="1.2" height="1.2" fill="#fff"/>
<rect x="984.4" y="273.5" width="1.2" height="1.2" fill="#fff"/>
<rect x="977.7" y="294.4" width="1.2" height="1.2" fill="#fff"/>
<rect x="978.5" y="280.0" width="1.2" height="1.2" fill="#fff"/>
<rect x="984.5" y="277.6" width="1.2" height="1.2" fill="#fff"/>
<rect x="994.6" y="287.2" width="1.2" height="1.2" fill="#fff"/>
<rect x="981.0" y="284.7" width="1.2" height="1.2" fill="#fff"/>
<rect x="976.3" y="279.9" width="1.2" height="1.2" fill="#fff"/>
<rect x="979.7" y="272.6" width="1.2" height="1.2" fill="#fff"/>
<rect x="979.9" y="271.7" width="1.2" height="1.2" fill="#fff"/>
<rect x="972.9" y="287.3" width="1.2" height="1.2" fill="#fff"/>
<rect x="982.8" y="270.8" width="1.2" height="1.2" fill="#fff"/>
<rect x="994.4" y="286.1" width="1.2" height="1.2" fill="#fff"/>
<rect x="983.5" y="277.5" width="1.2" height="1.2" fill="#fff"/>
<rect x="986.6" y="276.8" width="1.2" height="1.2" fill="#fff"/>
<rect x="982.9" y="288.1" width="1.2" height="1.2" fill="#fff"/>
<rect x="976.4" y="285.9" width="1.2" height="1.2" fill="#fff"/>
<rect x="990.7" y="279.8" width="1.2" height="1.2" fill="#fff"/>
<rect x="985.8" y="283.2" width="1.2" height="1.2" fill="#fff"/>
<rect x="979.7" y="284.5" width="1.2" height="1.2" fill="#fff"/>
<rect x="980.4" y="274.9" width="1.2" height="1.2" fill="#fff"/>
<rect x="988.5" y="271.7" width="1.2" height="1.2" fill="#fff"/>
<rect x="981.9" y="294.7" width="1.2" height="1.2" fill="#fff"/>
<rect x="981.3" y="278.4" width="1.2" height="1.2" fill="#fff"/>
<rect x="977.2" y="293.0" width="1.2" height="1.2" fill="#fff"/>
<rect x="980.7" y="275.8" width="1.2" height="1.2" fill="#fff"/>
<rect x="984.6" y="289.4" width="1.2" height="1.2" fill="#fff"/>
<rect x="978.2" y="272.8" width="1.2" height="1.2" fill="#fff"/>
<rect x="979.8" y="277.4" width="1.2" height="1.2" fill="#fff"/>
<rect x="988.5" y="285.8" width="1.2" height="1.2" fill="#fff"/>
<rect x="989.2" y="291.6" width="1.2" height="1.2" fill="#fff"/>
<rect x="972.0" y="284.2" width="1.2" height="1.2" fill="#fff"/>
<rect x="980.1" y="279.2" width="1.2" height="1.2" fill="#fff"/>
<rect x="977.6" y="280.3" width="1.2" height="1.2" fill="#fff"/>
<rect x="985.7" y="277.1" width="1.2" height="1.2" fill="#fff"/>
<rect x="989.8" y="293.8" width="1.2" height="1.2" fill="#fff"/>
<path d="M857.5,302.0h6M860.5,299.0v6" stroke="#000" stroke-width="1.2"/>
<path d="M891.5,302.0h6M894.5,299.0v6" stroke="#000" stroke-width="1.2"/>
<rect x="928.0" y="301.5" width="3.5" height="3.5" fill="#ff6060"/>
<path d="M925.5,302.0h6M928.5,299.0v6" stroke="#000" stroke-width="1.2"/>
<rect x="962.0" y="301.5" width="3.5" height="3.5" fill="#ff6060"/>
<path d="M959.5,302.0h6M962.5,299.0v6" stroke="#000" stroke-width="1.2"/>
<rect x="996.0" y="301.5" width="3.5" height="3.5" fill="#ff6060"/>
<path d="M993.5,302.0h6M996.5,299.0v6" stroke="#000" stroke-width="1.2"/>
<path fill-opacity="0.62" d="M837.0 317.7h1.0v1.0h-1.0zM857.7 319.7h0.9v0.9h-0.9zM856.5 311.6h1.3v1.3h-1.3zM838.1 318.9h0.9v0.9h-0.9zM856.4 324.9h1.3v1.3h-1.3zM844.1 313.0h1.3v1.3h-1.3zM848.5 316.6h1.4v1.4h-1.4zM845.8 320.3h1.2v1.2h-1.2zM855.4 318.1h1.2v1.2h-1.2zM840.7 320.2h0.8v0.8h-0.8zM859.2 313.4h1.3v1.3h-1.3zM852.5 316.7h1.2v1.2h-1.2zM840.4 316.7h1.2v1.2h-1.2zM842.3 316.2h1.2v1.2h-1.2zM856.3 316.4h1.4v1.4h-1.4zM850.8 311.8h1.2v1.2h-1.2zM849.3 319.2h1.1v1.1h-1.1zM845.7 319.4h1.5v1.5h-1.5zM844.5 324.8h1.4v1.4h-1.4zM848.6 321.3h0.8v0.8h-0.8zM842.4 316.6h1.0v1.0h-1.0zM851.1 317.7h1.3v1.3h-1.3zM842.6 320.1h0.9v0.9h-0.9zM851.4 323.3h0.9v0.9h-0.9zM860.1 315.9h1.1v1.1h-1.1zM836.1 317.3h1.4v1.4h-1.4zM855.4 322.6h1.2v1.2h-1.2zM851.5 314.3h0.8v0.8h-0.8zM847.3 315.5h1.3v1.3h-1.3zM853.0 318.2h1.1v1.1h-1.1zM846.8 318.0h1.4v1.4h-1.4zM847.7 324.4h1.3v1.3h-1.3zM844.8 318.7h0.9v0.9h-0.9zM846.0 317.6h1.0v1.0h-1.0zM853.4 315.6h1.0v1.0h-1.0zM844.9 317.9h1.2v1.2h-1.2zM844.1 318.3h1.3v1.3h-1.3zM847.5 326.6h1.1v1.1h-1.1zM849.3 312.8h1.3v1.3h-1.3zM853.5 317.5h1.5v1.5h-1.5zM849.8 317.6h0.8v0.8h-0.8zM847.2 318.7h0.8v0.8h-0.8zM843.9 321.5h1.0v1.0h-1.0zM841.1 322.5h1.5v1.5h-1.5zM854.9 316.7h1.4v1.4h-1.4zM844.7 319.1h1.1v1.1h-1.1zM849.7 321.5h0.8v0.8h-0.8zM846.1 319.3h0.9v0.9h-0.9zM844.1 320.8h1.4v1.4h-1.4zM857.9 318.4h1.4v1.4h-1.4zM845.5 320.7h1.1v1.1h-1.1zM841.7 318.2h1.4v1.4h-1.4zM852.5 314.3h0.9v0.9h-0.9zM845.4 322.5h1.4v1.4h-1.4zM848.9 319.4h1.3v1.3h-1.3zM839.9 317.8h1.0v1.0h-1.0zM848.7 323.4h1.1v1.1h-1.1zM846.8 313.1h0.9v0.9h-0.9zM845.2 317.3h1.1v1.1h-1.1zM849.2 321.2h1.0v1.0h-1.0zM841.6 322.9h1.5v1.5h-1.5zM852.1 316.1h1.3v1.3h-1.3zM834.6 321.5h1.0v1.0h-1.0zM840.0 321.5h1.1v1.1h-1.1zM845.4 317.9h1.5v1.5h-1.5zM852.7 317.6h1.4v1.4h-1.4zM847.9 315.0h1.5v1.5h-1.5zM839.6 319.3h0.8v0.8h-0.8zM851.8 316.9h1.4v1.4h-1.4zM849.9 313.8h1.2v1.2h-1.2zM841.0 318.9h1.2v1.2h-1.2zM842.8 311.5h1.2v1.2h-1.2zM848.7 313.5h1.4v1.4h-1.4z"/>
<path fill-opacity="0.88" d="M841.9 318.5h1.1v1.1h-1.1zM852.7 318.8h1.0v1.0h-1.0zM853.9 321.2h1.1v1.1h-1.1zM854.6 318.6h1.4v1.4h-1.4zM852.6 315.0h1.5v1.5h-1.5zM846.8 315.0h1.1v1.1h-1.1zM853.2 317.3h1.4v1.4h-1.4zM850.4 314.0h1.3v1.3h-1.3zM835.6 319.8h0.9v0.9h-0.9zM835.8 319.3h1.4v1.4h-1.4zM842.3 323.3h1.2v1.2h-1.2zM848.8 318.5h1.2v1.2h-1.2zM850.8 322.8h1.3v1.3h-1.3zM853.5 325.0h1.2v1.2h-1.2zM853.5 312.5h1.0v1.0h-1.0zM845.0 316.4h1.3v1.3h-1.3zM849.6 321.5h0.9v0.9h-0.9zM848.6 319.4h1.3v1.3h-1.3zM848.4 324.6h1.3v1.3h-1.3zM844.0 324.0h1.4v1.4h-1.4zM857.6 317.2h1.2v1.2h-1.2zM845.9 319.2h0.8v0.8h-0.8zM845.7 315.2h1.0v1.0h-1.0zM846.5 322.2h1.0v1.0h-1.0zM839.1 321.0h1.3v1.3h-1.3zM846.2 314.2h1.1v1.1h-1.1zM849.8 322.0h1.0v1.0h-1.0zM851.2 309.1h1.3v1.3h-1.3zM845.7 319.8h1.0v1.0h-1.0zM859.6 318.4h1.0v1.0h-1.0zM846.0 318.7h1.1v1.1h-1.1zM846.6 314.6h1.2v1.2h-1.2zM842.1 316.5h0.8v0.8h-0.8zM852.0 313.5h1.1v1.1h-1.1zM842.9 324.8h1.3v1.3h-1.3zM848.1 314.4h1.3v1.3h-1.3zM856.6 316.4h1.5v1.5h-1.5zM852.4 319.7h1.0v1.0h-1.0zM843.6 324.9h0.9v0.9h-0.9zM849.2 318.0h1.0v1.0h-1.0zM849.1 313.7h1.1v1.1h-1.1zM845.8 316.1h1.3v1.3h-1.3zM843.8 317.8h1.1v1.1h-1.1zM843.5 320.6h1.2v1.2h-1.2zM847.5 318.2h1.5v1.5h-1.5zM846.6 318.8h1.4v1.4h-1.4zM844.4 320.7h0.8v0.8h-0.8zM855.6 319.1h1.2v1.2h-1.2zM846.6 315.9h1.4v1.4h-1.4zM859.9 320.5h1.5v1.5h-1.5zM844.4 312.4h1.0v1.0h-1.0zM842.2 318.4h1.1v1.1h-1.1zM850.2 316.2h0.9v0.9h-0.9zM839.9 314.9h1.2v1.2h-1.2zM838.5 313.3h1.0v1.0h-1.0zM842.1 313.1h0.9v0.9h-0.9zM846.3 315.6h1.1v1.1h-1.1zM853.2 321.5h1.5v1.5h-1.5zM847.2 316.0h1.3v1.3h-1.3zM849.3 323.8h1.5v1.5h-1.5zM857.9 313.5h1.4v1.4h-1.4zM846.2 319.5h0.9v0.9h-0.9zM838.8 320.3h1.1v1.1h-1.1zM847.8 315.4h0.8v0.8h-0.8zM845.0 322.1h1.5v1.5h-1.5zM849.2 317.0h1.1v1.1h-1.1zM853.9 320.1h0.9v0.9h-0.9zM847.3 316.0h1.4v1.4h-1.4zM851.0 316.0h1.4v1.4h-1.4zM852.0 312.8h0.9v0.9h-0.9zM841.4 321.2h1.3v1.3h-1.3zM845.1 316.4h1.4v1.4h-1.4zM852.1 311.7h1.2v1.2h-1.2zM848.8 316.3h1.3v1.3h-1.3zM847.5 316.1h1.0v1.0h-1.0zM844.0 314.5h0.8v0.8h-0.8zM844.8 316.1h1.2v1.2h-1.2zM850.4 312.5h1.4v1.4h-1.4zM848.3 319.7h1.1v1.1h-1.1zM859.4 320.1h1.4v1.4h-1.4zM855.0 319.9h1.3v1.3h-1.3zM842.1 324.5h1.4v1.4h-1.4zM846.9 317.1h1.2v1.2h-1.2zM846.4 315.4h1.5v1.5h-1.5zM849.1 309.8h0.8v0.8h-0.8zM840.7 320.0h1.0v1.0h-1.0zM853.8 315.8h1.2v1.2h-1.2z"/>
<path d="M873.0,311.0h16" stroke="#000" stroke-width="0.7" stroke-opacity="0.6" stroke-dasharray="2 1"/>
<path d="M873.0,314.0h16" stroke="#000" stroke-width="0.7" stroke-opacity="0.6" stroke-dasharray="2 1"/>
<path d="M873.0,317.0h16" stroke="#000" stroke-width="0.7" stroke-opacity="0.6" stroke-dasharray="2 1"/>
<path d="M873.0,320.0h16" stroke="#000" stroke-width="0.7" stroke-opacity="0.6" stroke-dasharray="2 1"/>
<path fill-opacity="0.38" d="M916.0 301.3h0.9v0.9h-0.9zM917.4 310.6h1.2v1.2h-1.2zM915.1 311.3h0.7v0.7h-0.7zM916.7 310.0h0.9v0.9h-0.9zM917.8 315.5h1.0v1.0h-1.0zM918.2 313.2h0.7v0.7h-0.7zM914.1 307.8h0.9v0.9h-0.9zM919.9 327.9h0.7v0.7h-0.7zM915.6 326.2h1.1v1.1h-1.1zM915.2 315.4h0.9v0.9h-0.9zM916.5 313.0h1.1v1.1h-1.1zM917.7 313.7h0.9v0.9h-0.9zM916.1 306.3h0.9v0.9h-0.9zM916.4 318.9h0.8v0.8h-0.8zM918.0 312.9h0.9v0.9h-0.9zM920.6 305.5h0.9v0.9h-0.9zM911.5 316.5h0.8v0.8h-0.8z"/>
<path fill-opacity="0.62" d="M921.7 310.5h0.8v0.8h-0.8zM915.4 317.5h1.2v1.2h-1.2zM916.0 314.2h1.2v1.2h-1.2zM916.7 321.4h0.6v0.6h-0.6zM915.4 314.9h1.1v1.1h-1.1zM922.8 320.9h1.1v1.1h-1.1zM917.2 313.0h1.0v1.0h-1.0zM920.0 321.0h0.6v0.6h-0.6zM916.9 315.6h0.9v0.9h-0.9zM917.4 308.3h1.1v1.1h-1.1zM914.0 307.0h0.8v0.8h-0.8zM917.1 311.1h0.9v0.9h-0.9zM916.4 314.6h0.7v0.7h-0.7zM916.2 312.7h1.1v1.1h-1.1zM919.0 319.3h0.7v0.7h-0.7zM917.1 315.9h1.0v1.0h-1.0zM914.9 313.7h1.0v1.0h-1.0zM917.0 310.3h1.1v1.1h-1.1zM916.1 316.0h1.0v1.0h-1.0zM918.5 316.3h1.1v1.1h-1.1zM918.4 318.9h1.2v1.2h-1.2zM915.2 314.7h0.7v0.7h-0.7zM919.6 329.7h1.0v1.0h-1.0z"/>
<path d="M938,309L945,316M950,313L959,318M954,307L951,320" stroke="#999" stroke-width="1.2"/>
<path d="M970,318C975,305 985,310 980,320C990,312 995,318 998,316" fill="none" stroke="#888" stroke-width="1"/>
</g></svg>
  <div class="frame" style="left:829px;top:322px;width:192px;height:28px;background:#393939"></div>
  <div class="ent" style="left:835px;top:327px;width:179px;height:20px"></div>
  <div class="a m" style="left:837px;top:330px;font-size:11.5px;color:#e0e0e0;letter-spacing:-0.9px">Basic,</div>
  <svg class="a" style="left:998px;top:331px" width="12" height="10"><rect x="0" y="0" width="12" height="10" fill="#2a2a2a"/><path d="M1.5,3 L6,7.5 L10.5,3" fill="none" stroke="#f0f0f0" stroke-width="1.8"/></svg>
  <div class="a" style="left:829px;top:351px;width:192px;height:20px;background:#3a3a3a;border:1px solid #8a8a8a"></div>
  <div class="a" style="left:830px;top:352px;width:6px;height:18px;background:#4e4e4e"></div>
  <div class="a" style="left:835.5px;top:352px;width:1.2px;height:18px;background:#000"></div>
  <div class="a" style="left:831px;top:354px;font-size:11px;color:#c8c8c8">間隔</div>
  <div class="a m" style="left:973px;top:354px;font-size:11.5px;color:#cccccc;letter-spacing:-0.6px">10.0</div>
  <div class="a" style="left:1001px;top:352px;width:19px;height:18px;background:#4a4a4a"></div>
  <svg class="a" style="left:1001px;top:352px" width="19" height="18"><path d="M6,7 L9.5,3.5 L13,7 M6,11 L9.5,14.5 L13,11" fill="none" stroke="#bdbdbd" stroke-width="1.4"/></svg>
  <svg class="a" style="left:823px;top:370px" width="203" height="30">
    <defs><pattern id="ck" width="2" height="2" patternUnits="userSpaceOnUse"><rect width="2" height="2" fill="#8a8a8a"/><rect width="1" height="1" fill="#d0d0d0"/><rect x="1" y="1" width="1" height="1" fill="#d0d0d0"/></pattern></defs>
    <g fill="#c8c8c8">
      <rect x="13" y="8" width="12" height="1.8"/><rect x="13" y="12" width="7" height="1.8"/><rect x="13" y="16" width="4" height="1.8"/><rect x="13" y="20" width="17" height="1.8"/>
      <path d="M27,6 L30,9 L21.5,18 L18,19 L19,15.5Z"/>
    </g>
    <g fill="none" stroke="#c8c8c8" stroke-width="1.6">
      <path d="M51,8 H55 L58.5,11.5 V22 H47 V13"/><path d="M44,8.5 H52 M48,4.5 V12.5"/>
      <rect x="76.5" y="7.5" width="10" height="8"/><path d="M80.5,15.5 V18.8 H90.5 V11.5 H86.5"/>
    </g>
    <rect x="106" y="6" width="16" height="16" fill="url(#ck)"/>
    <path d="M109.5,9.5 L118.5,18.5 M118.5,9.5 L109.5,18.5" stroke="#333" stroke-width="3"/>
    <path d="M150.5,16.5 A6,6 0 1 1 150.5,10" fill="none" stroke="#c8c8c8" stroke-width="2.4"/>
    <path d="M147,6.5 L153.5,10.5 L147.5,14Z" fill="#c8c8c8"/>
    <path d="M175,13 V6.5 H182 L186.5,11 V14" fill="none" stroke="#c8c8c8" stroke-width="1.3" stroke-dasharray="1.5 1"/>
    <path d="M171,15 Q171,13 173,13 H187 V22 H173 Q171,22 171,20Z" fill="url(#ck)"/>
  </svg>
  <div class="a" style="left:915px;top:400px;width:18px;height:2px;background:repeating-linear-gradient(90deg,#c8c8c8 0 3.5px,transparent 3.5px 7px)"></div>
  <div class="a" style="left:821px;top:425px;width:2px;height:18px;background:repeating-linear-gradient(#bdbdbd 0 4px,transparent 4px 7px)"></div>
  <!-- layers frame -->
  <div class="a" style="left:823px;top:426px;width:203px;height:309px;background:#3c3c3c;border:1px solid #555;border-bottom:none;border-right:none"></div>
  <div class="tabact" style="left:823px;top:403px;width:31px;height:24px;background:#3c3c3c;border-color:#555"></div>
  <div class="tab" style="left:854px;top:406px;width:26px;height:20px"></div>
  <div class="tab" style="left:881px;top:406px;width:27px;height:20px"></div>
  <svg class="a" style="left:823px;top:403px" width="100" height="24">
    <g fill="#c8c8c8">
      <path d="M10,6 H24 L21,10 H7Z"/><path d="M10,11 H24 L21,15 H7Z"/><path d="M10,16 H24 L21,20 H7Z"/>
    </g>
    <rect x="35.5" y="5.5" width="15" height="15" fill="none" stroke="#cfcfcf" stroke-width="1.4"/>
    <rect x="39" y="8" width="2" height="10" fill="#cfcfcf"/><rect x="42" y="8" width="2" height="10" fill="#cfcfcf"/><rect x="45" y="8" width="2" height="10" fill="#cfcfcf"/>
    <path d="M67,9 H75" stroke="#cfcfcf" stroke-width="1.6"/><path d="M65.5,19 C65.5,12 77,12 77,19" fill="none" stroke="#cfcfcf" stroke-width="2.2"/>
    <rect x="63" y="7.5" width="4" height="3.5" fill="#cfcfcf"/><rect x="75" y="7.5" width="4" height="3.5" fill="#cfcfcf"/>
  </svg>
  <div class="pmenu" style="left:1010px;top:410px"></div>
  <div class="btn" style="left:829px;top:429px;width:143px;height:30px"></div>
  <div class="a" style="left:837px;top:437px;font-size:11px;color:#6a6a6a">モード</div>
  <div class="a" style="left:922px;top:437px;font-size:11px;color:#6a6a6a">標準</div>
  <svg class="a" style="left:951px;top:438px" width="14" height="10"><path d="M2,2 L7,7 L12,2" fill="none" stroke="#f0f0f0" stroke-width="1.6"/></svg>
  <div class="btn" style="left:974px;top:429px;width:47px;height:30px"></div>
  <svg class="a" style="left:976px;top:434px" width="44" height="20">
    <path d="M6,7 A6,6 0 1 1 8,15" fill="none" stroke="#bdbdbd" stroke-width="1.6" stroke-dasharray="2 1"/>
    <path d="M3,6 L8,4 L8,9Z" fill="#bdbdbd"/>
    <circle cx="8" cy="16" r="2.4" fill="#bdbdbd"/>
    <path d="M25,6 L30,11 L35,6" fill="none" stroke="#f0f0f0" stroke-width="1.6"/>
  </svg>
  <div class="a" style="left:830px;top:461px;width:170px;height:17px;background:#595959"></div>
  <div class="a" style="left:999px;top:461px;width:2px;height:17px;background:#000"></div>
  <div class="a" style="left:1001px;top:461px;width:19px;height:17px;background:#3e3e3e;border:1px solid #444"></div>
  <svg class="a" style="left:1001px;top:461px" width="19" height="17"><path d="M6,6.5 L9.5,3 L13,6.5 M6,10.5 L9.5,14 L13,10.5" fill="none" stroke="#5a5a5a" stroke-width="1.3"/></svg>
  <div class="a" style="left:831px;top:463px;font-size:11px;color:#f0f0f0">不透明度</div>
  <div class="a m" style="left:967px;top:463px;font-size:11.5px;color:#d0d0d0;letter-spacing:-0.6px">100.0</div>
  <div class="a" style="left:829px;top:487px;font-size:11px;color:#b0b0b0">保護<span class="m" style="letter-spacing:-1px">:</span></div>
  <svg class="a" style="left:860px;top:484px" width="80" height="20">
    <defs><pattern id="ck3" width="2" height="2" patternUnits="userSpaceOnUse"><rect width="2" height="2" fill="#7e7e7e"/><rect width="1" height="1" fill="#dadada"/><rect x="1" y="1" width="1" height="1" fill="#dadada"/></pattern>
    <pattern id="ck4" width="2" height="2" patternUnits="userSpaceOnUse"><rect width="2" height="2" fill="#3e3e3e"/><rect width="1" height="1" fill="#8e8e8e"/><rect x="1" y="1" width="1" height="1" fill="#8e8e8e"/></pattern></defs>
    <path d="M18.6,2.6 L20,3.8 L12,13.4 L9.8,11.8 Z" fill="url(#ck3)"/>
    <path d="M10,12.2 C12,12.8 12.5,14.5 11,16 C9.5,17.3 6,17.6 3.8,17.6 C5.5,16.3 6.5,14 8,12.8 C8.5,12.3 9.3,12.1 10,12.2Z" fill="url(#ck3)"/>
    <g fill="url(#ck3)"><rect x="37" y="4" width="2" height="14"/><rect x="31" y="9.7" width="14" height="2"/>
    <path d="M38,1.8 L34.6,5.2 H41.4Z M38,19.6 L34.6,16.2 H41.4Z M29.6,10.7 L33,7.3 V14.1Z M46.4,10.7 L43,7.3 V14.1Z"/></g>
    <rect x="57" y="2" width="16" height="16" fill="url(#ck4)"/>
    <path d="M57,2h4v4h-4zM65,2h4v4h-4zM61,6h4v4h-4zM69,6h4v4h-4zM57,10h4v4h-4zM65,10h4v4h-4zM61,14h4v4h-4zM69,14h4v4h-4z" fill="url(#ck3)"/>
  </svg>
  <div class="a" style="left:830px;top:508px;width:190px;height:227px;background:#303030"></div>
  <div class="a" style="left:831px;top:509px;width:25px;height:24px;background:#454545"></div>
  <div class="a" style="left:857px;top:509px;width:25px;height:24px;background:#454545"></div>
  <div class="a" style="left:884px;top:509px;width:135px;height:24px;background:#454545"></div>
  <svg class="a" style="left:831px;top:509px" width="52" height="24">
    <path d="M4,12 C8,6 17,6 21,12 C17,18 8,18 4,12Z" fill="#cfcfcf"/>
    <circle cx="12.5" cy="12" r="3.4" fill="#454545"/><circle cx="12.5" cy="12" r="2" fill="#cfcfcf"/>
    <rect x="35" y="4" width="7" height="7" fill="none" stroke="#cfcfcf" stroke-width="1.8"/>
    <rect x="38" y="11" width="1.6" height="3" fill="#cfcfcf"/>
    <path d="M35,20 V15 H42 V20" fill="none" stroke="#cfcfcf" stroke-width="1.8"/>
  </svg>

  <div class="a bl"></div><div class="a br"></div>
</div>
</body></html>
